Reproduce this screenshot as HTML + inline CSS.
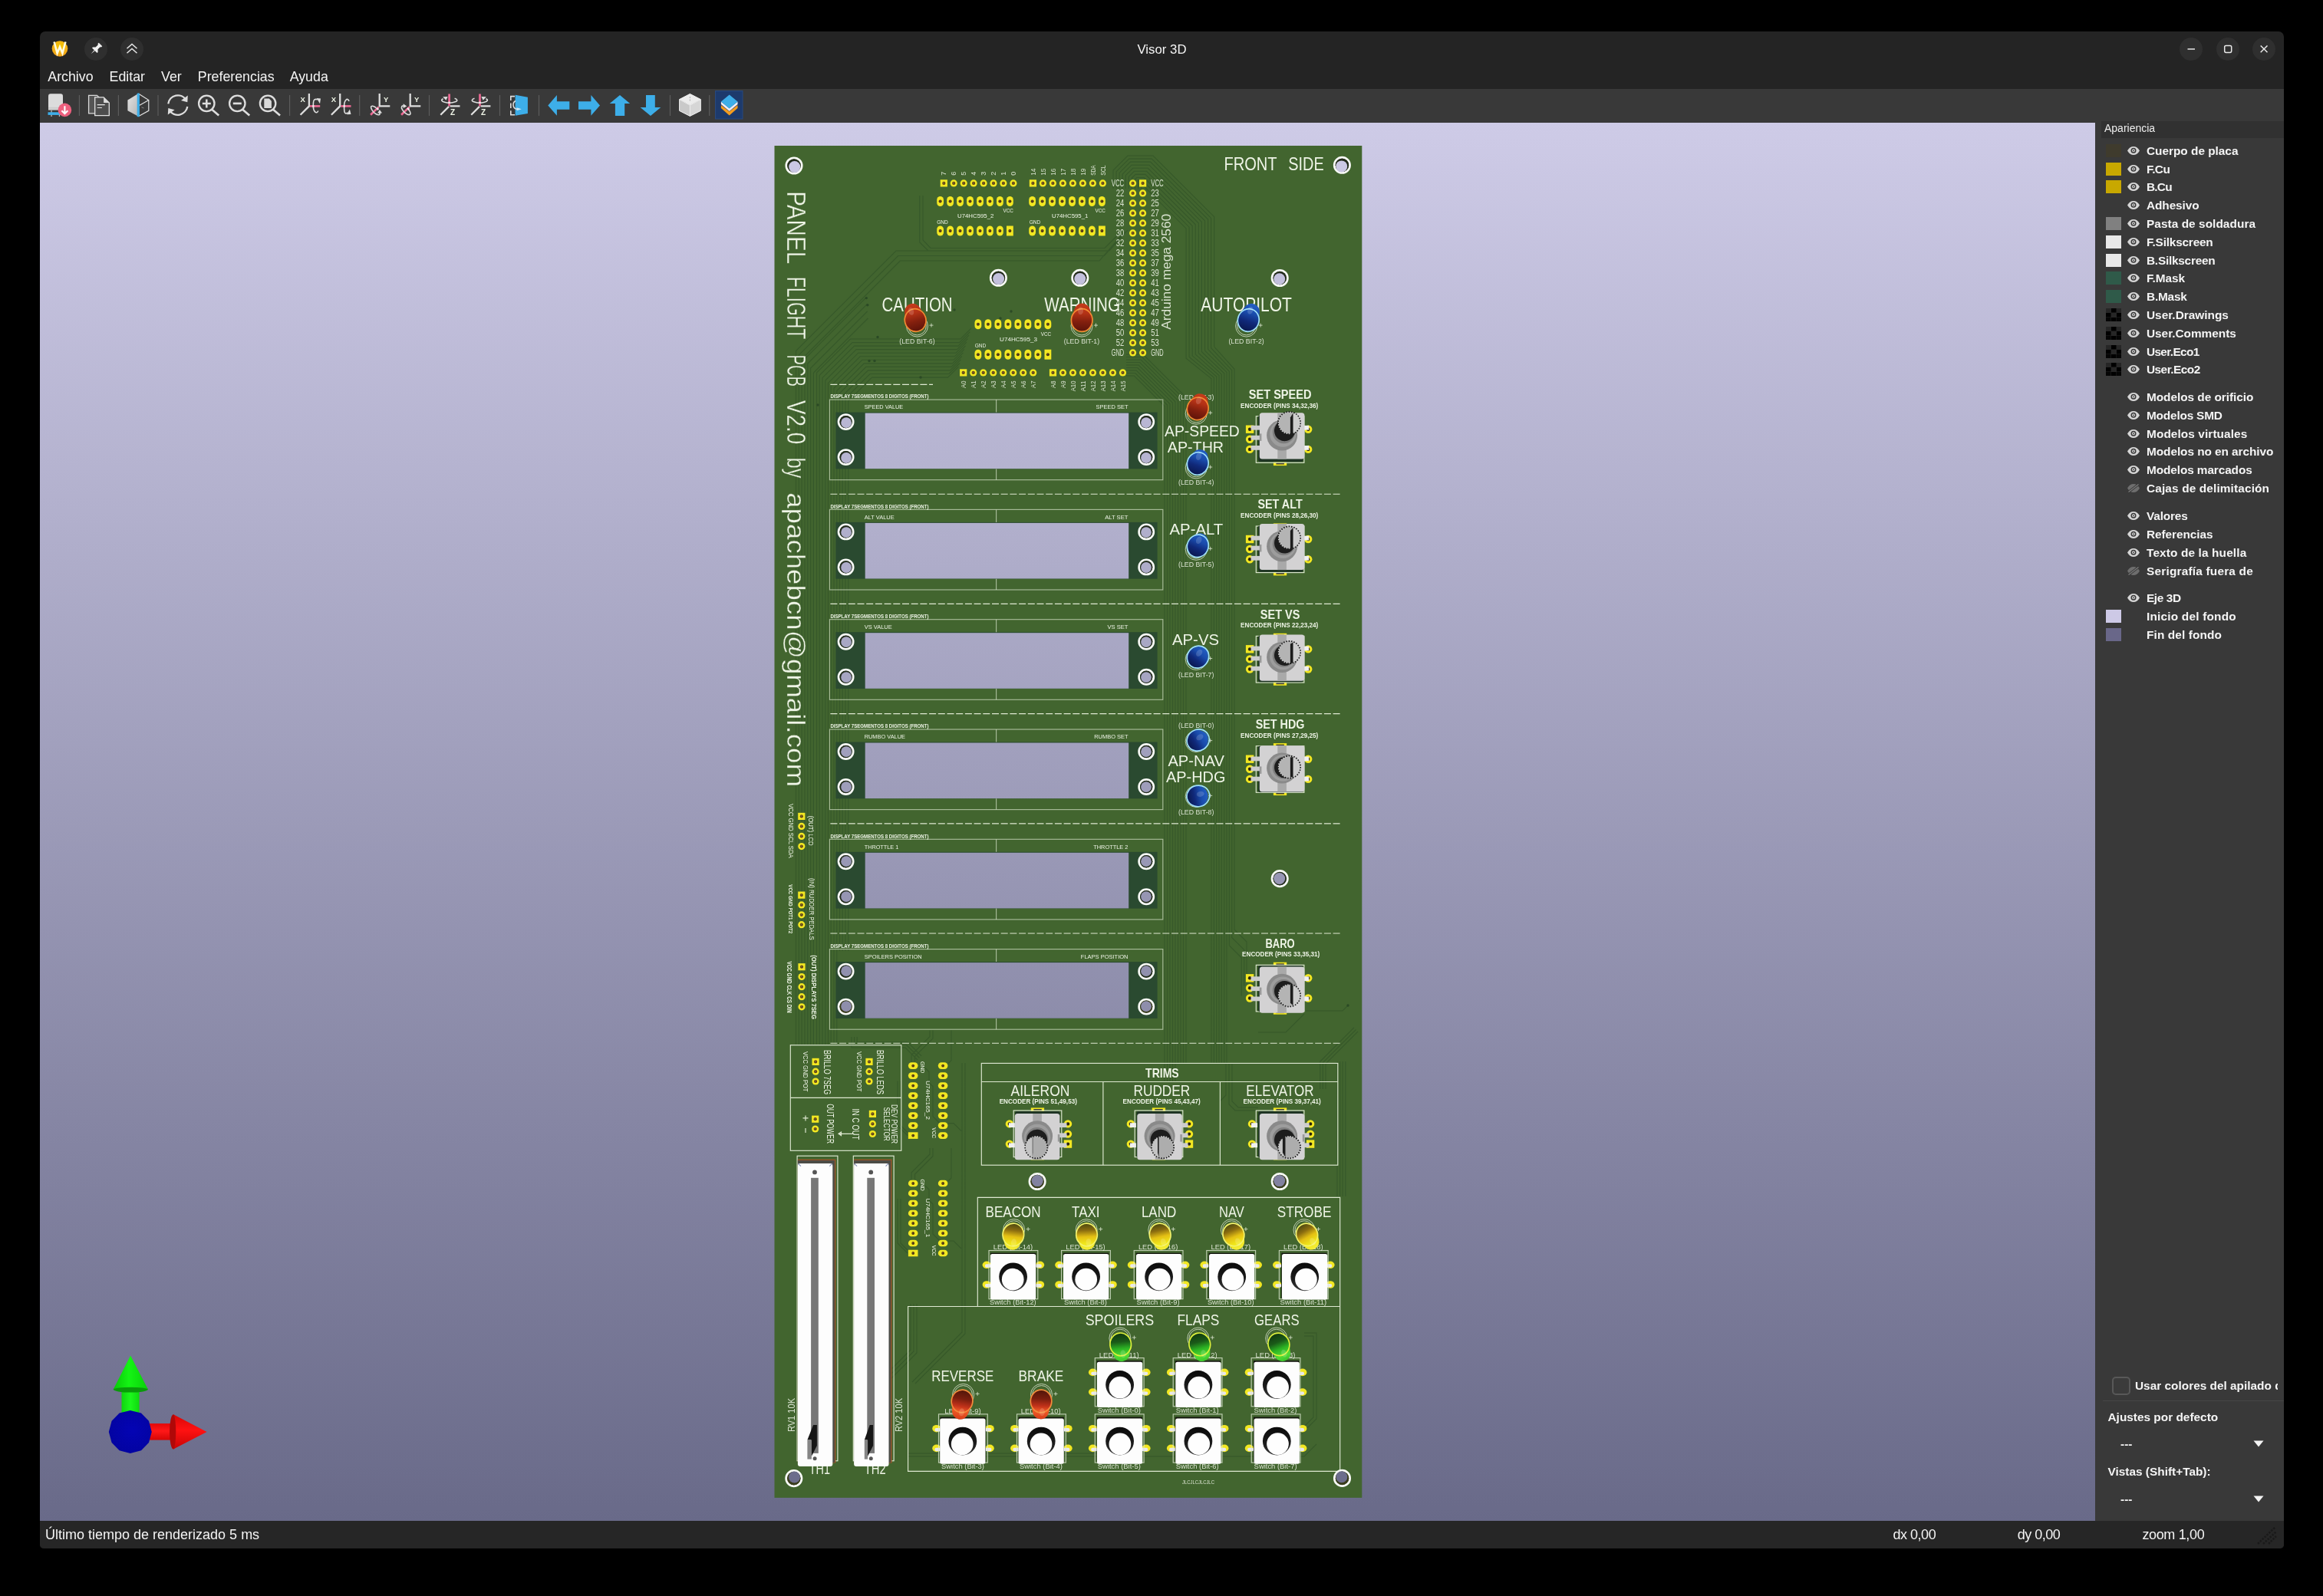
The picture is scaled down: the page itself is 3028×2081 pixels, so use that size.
<!DOCTYPE html>
<html lang="es"><head><meta charset="utf-8"><title>Visor 3D</title>
<style>
*{box-sizing:border-box;margin:0;padding:0}
html,body{width:3028px;height:2081px;background:#000;overflow:hidden}
body{font-family:"Liberation Sans",sans-serif;color:#f2f2f2;position:relative}
#win{will-change:transform;position:absolute;left:52px;top:41px;width:2925px;height:1978px;background:#242424;border-radius:7px 7px 5px 5px;overflow:hidden}
.abs{position:absolute}
#title{position:absolute;left:0;top:0;width:100%;height:44px}
#title .t{position:absolute;left:0;width:100%;top:14px;text-align:center;font-size:16.8px;line-height:20px;color:#f4f4f4;padding-left:0px}
.cbtn{position:absolute;top:7px;width:30px;height:30px;border-radius:15px;background:#2f2f2f}
#menu{position:absolute;left:0;top:44px;width:100%;height:31px;font-size:17.8px;line-height:22px}
#menu span{position:absolute;top:4px;color:#f4f4f4;white-space:nowrap}
#tool{position:absolute;left:0;top:75px;width:100%;height:44px;background:#393939}
.sep{position:absolute;top:7px;width:1px;height:30px;background:#555}
.ico{position:absolute;top:4px;width:36px;height:36px}
#canvas{position:absolute;left:0;top:119px;width:2679px;height:1823px;background:linear-gradient(#cecbe7,#696a89)}
#side{position:absolute;left:2679px;top:119px;width:246px;height:1823px;background:#393939}
#side .cap{position:absolute;left:8px;top:-2px;width:238px;height:22px;background:#313131;font-size:14px;line-height:18px;padding-left:4px;color:#ededed}
.row{position:absolute;left:0;height:24px;width:246px;font-weight:bold;font-size:15.4px;line-height:24px;white-space:nowrap}
.row .sw{position:absolute;left:14px;top:3px;width:20px;height:17px}
.row .eye{position:absolute;left:41px;top:3px;width:18px;height:17px}
.row .lb{position:absolute;left:67px;top:0;color:#f4f4f4}
#status{position:absolute;left:0;top:1942px;width:100%;height:36px;background:#262626;font-size:18px;line-height:22px;color:#f4f4f4}
#status span{position:absolute;top:7px;white-space:nowrap}
</style></head>
<body>
<div id="win">
<div id="title"><svg class="abs" style="left:13px;top:9px" width="26" height="26" viewBox="0 0 26 26"><defs><radialGradient id="gw" cx="0.5" cy="0.35" r="0.7"><stop offset="0" stop-color="#f5c800"/><stop offset="1" stop-color="#f0a020"/></radialGradient></defs><circle cx="13" cy="13.500" r="10.300" fill="url(#gw)"/><path d="M5.600 4.500L9.600 19.500L13 11L16.400 19.500L20.400 4.500" fill="none" stroke="#fffbe0" stroke-width="2.600" stroke-linejoin="miter"/></svg><div class="cbtn" style="left:57.800px;top:7.500px"></div><div class="cbtn" style="left:105.200px;top:7.500px"></div><svg class="abs" style="left:57.800px;top:7.500px" width="30" height="30" viewBox="0 0 30 30"><g transform="rotate(45 15 15)" fill="#f2f2f2"><path d="M11.800 6.500h6.400v1.800l-1.200 0.800v4.400l2.600 2.400v1.600h-9.200v-1.600l2.600-2.400v-4.400l-1.200-0.800z"/><path d="M14.400 17.500h1.200l-0.600 6.500z"/></g></svg><svg class="abs" style="left:105.200px;top:7.500px" width="30" height="30" viewBox="0 0 30 30"><path d="M8.500 14.300L15 8.500L21.500 14.300M8.500 20.300L15 14.500L21.500 20.300" fill="none" stroke="#e8e8e8" stroke-width="1.500"/></svg><div class="t">Visor 3D</div><div class="cbtn" style="left:2789.2px;top:7.500px"></div><div class="cbtn" style="left:2836.6px;top:7.500px"></div><div class="cbtn" style="left:2884.4px;top:7.500px"></div><svg class="abs" style="left:2789.200px;top:7.500px" width="30" height="30" viewBox="0 0 30 30"><path d="M10.500 15h9.500" stroke="#e8e8e8" stroke-width="1.400"/></svg><svg class="abs" style="left:2836.600px;top:7.500px" width="30" height="30" viewBox="0 0 30 30"><rect x="10.700" y="10.400" width="9" height="9" rx="1.800" fill="none" stroke="#e8e8e8" stroke-width="1.500"/></svg><svg class="abs" style="left:2884.400px;top:7.500px" width="30" height="30" viewBox="0 0 30 30"><path d="M10.700 10.500l8.800 8.800M19.500 10.500l-8.800 8.800" stroke="#e8e8e8" stroke-width="1.500"/></svg></div>
<div id="menu"><span style="left:10.3px">Archivo</span><span style="left:90.6px">Editar</span><span style="left:158.0px">Ver</span><span style="left:205.8px">Preferencias</span><span style="left:325.7px">Ayuda</span></div>
<div id="tool"><svg class="abs" style="left:0;top:0;will-change:transform" width="1000" height="44" viewBox="52 116 1000 44" font-family="Liberation Sans, sans-serif"><path d="M63 125.200a3 3 0 0 1 3-3h13a3 3 0 0 1 3 3V139H63z" fill="#dcdcdc"/><rect x="63" y="139.800" width="19" height="3.800" fill="#d0d0d0"/><rect x="63" y="138.800" width="19" height="1" fill="#f2f2f2"/><rect x="66.400" y="143.600" width="1.300" height="8.400" fill="#bdbdbd"/><rect x="76.800" y="143.600" width="1.300" height="8.400" fill="#bdbdbd"/><rect x="62.500" y="146.300" width="17" height="3.600" fill="#3daee9"/><circle cx="84.400" cy="143.400" r="8.800" fill="#ec5f7d"/><path d="M84.400 138.200v9.400M80.400 144.200l4 4 4-4" stroke="#fff" stroke-width="2.100" fill="none"/><rect x="102.8" y="124" width="1.200" height="27" fill="#5c5c5c"/><path d="M115.600 124.300h10.800l2.800 2.800v20.800h-13.600z" fill="#555" stroke="#d9d9d9" stroke-width="1.300"/><path d="M123.700 126.900h11.400l7.200 7.200v16.500h-18.600z" fill="#4d4d4d" stroke="#e2e2e2" stroke-width="1.300"/><path d="M135.100 126.900v7.200h7.200z" fill="#dcdcdc"/><path d="M126.700 136.600h10M126.700 140.500h6.200" stroke="#e6e6e6" stroke-width="1.200"/><rect x="153.8" y="124" width="1.200" height="27" fill="#5c5c5c"/><defs><linearGradient id="gcb" x1="0" y1="0" x2="1" y2="1"><stop offset="0" stop-color="#e4e4e4"/><stop offset="1" stop-color="#b4b4b4"/></linearGradient></defs><path d="M180.300 122.100L166.400 130.500V144.300L180.300 151.800z" fill="url(#gcb)"/><path d="M180.300 122.100L193.800 130.500V144.300L180.300 151.800M193.800 130.500L181.500 137.500" fill="none" stroke="#e2e2e2" stroke-width="1.200"/><path d="M184.500 139.800l3 1.200" stroke="#9a9a9a" stroke-width="0.800"/><rect x="178.700" y="121.600" width="3.200" height="30.600" fill="#3daee9"/><rect x="205.4" y="124" width="1.200" height="27" fill="#5c5c5c"/><g fill="none" stroke="#dedede" stroke-width="2.300"><path d="M219.300 135.300A12.700 12.700 0 0 1 242.600 130.200"/><path d="M244.300 139A12.700 12.700 0 0 1 221 143.900"/></g><path d="M244.800 124.600l-0.500 8.600-8.300-2.300z" fill="#dedede"/><path d="M218.800 149.600l0.500-8.600 8.300 2.300z" fill="#dedede"/><circle cx="269.3" cy="134.900" r="10.200" fill="none" stroke="#dedede" stroke-width="2.300"/><path d="M275.9 142.400l9.300 8.200" stroke="#dedede" stroke-width="2.600"/><path d="M263.800 134.900h11M269.300 129.400v11" stroke="#dedede" stroke-width="2.500"/><circle cx="309.3" cy="134.900" r="10.200" fill="none" stroke="#dedede" stroke-width="2.300"/><path d="M315.9 142.400l9.300 8.200" stroke="#dedede" stroke-width="2.600"/><path d="M303.800 134.900h11" stroke="#dedede" stroke-width="2.700"/><circle cx="349.1" cy="134.900" r="10.200" fill="none" stroke="#dedede" stroke-width="2.300"/><path d="M355.7 142.400l9.300 8.200" stroke="#dedede" stroke-width="2.600"/><path d="M344.300 128.600h6.500l3.100 3.100v9.200h-9.600z" fill="#d9d9d9"/><rect x="377" y="124" width="1.200" height="27" fill="#5c5c5c"/><path d="M402.9 122.100V138.400L391.6 149.700" fill="none" stroke="#dedede" stroke-width="2.300"/><path d="M403.9 138.400H417.2" stroke="#ec6a94" stroke-width="2.600"/><text x="394.7" y="133" font-size="9.500" font-weight="bold" fill="#dedede" text-anchor="middle">X</text><path d="M414 129.700C408.5 128 408.3 132 408.3 138.400S412.5 150 414.8 144.500" fill="none" stroke="#dedede" stroke-width="1.600"/><path d="M412.8 128l5.200 0.600-1 6.600z" fill="#dedede"/><rect x="407.3" y="137.100" width="2.200" height="2.600" fill="#f3e6ea"/><path d="M443.2 122.100V138.400L431.9 149.700" fill="none" stroke="#dedede" stroke-width="2.300"/><path d="M444.2 138.400H457.5" stroke="#ec6a94" stroke-width="2.600"/><text x="435" y="133" font-size="9.500" font-weight="bold" fill="#dedede" text-anchor="middle">X</text><path d="M455.1 132C452.8 126 448.6 131 448.6 138.400S448.8 150 453.3 146.800" fill="none" stroke="#dedede" stroke-width="1.600"/><path d="M452 149.300l5.500-0.300-1.600-6.500z" fill="#dedede"/><rect x="447.6" y="137.100" width="2.200" height="2.600" fill="#f3e6ea"/><rect x="468.1" y="124" width="1.200" height="27" fill="#5c5c5c"/><path d="M494.7 122.100V138.400H508.3" fill="none" stroke="#dedede" stroke-width="2.300"/><path d="M493.7 139.400L483.1 149.700" stroke="#ec6a94" stroke-width="2.700"/><text x="503.2" y="133.300" font-size="9.500" font-weight="bold" fill="#dedede" text-anchor="middle">Y</text><g transform="translate(489.3 143.9) rotate(45)"><path d="M-1.500 -3.100A7.500 3.200 0 1 0 5.500 -2.200" fill="none" stroke="#dedede" stroke-width="1.600"/><path d="M3.200 -4.600l5.600 1-4.200 4.200z" fill="#dedede"/></g><path d="M490.9 140.800l2.400 2.200" stroke="#f3e6ea" stroke-width="2.400"/><path d="M534.7 122.100V138.400H548.3" fill="none" stroke="#dedede" stroke-width="2.300"/><path d="M533.7 139.400L523.1 149.700" stroke="#ec6a94" stroke-width="2.700"/><text x="543.2" y="133.300" font-size="9.500" font-weight="bold" fill="#dedede" text-anchor="middle">Y</text><g transform="translate(529.3 143.9) rotate(45)"><path d="M1.500 -3.100A7.500 3.200 0 1 1 -5.500 -2.200" fill="none" stroke="#dedede" stroke-width="1.600"/><path d="M-3.200 -4.600l-5.600 1 4.200 4.200z" fill="#dedede"/></g><path d="M530.9 140.800l2.400 2.200" stroke="#f3e6ea" stroke-width="2.400"/><rect x="558.9" y="124" width="1.200" height="27" fill="#5c5c5c"/><path d="M586.6 138.400H599.5M585.1 138.900L574.3 149.700" fill="none" stroke="#dedede" stroke-width="2.300"/><path d="M585.6 122.500V138.400" stroke="#ec6a94" stroke-width="2.700"/><text x="590.1" y="150.400" font-size="10" font-weight="bold" fill="#dedede" text-anchor="middle">Z</text><path d="M592.6 128.3A10 3.300 0 1 1 577.6 128.8" fill="none" stroke="#dedede" stroke-width="1.600"/><path d="M577.2 126.300l6.500-0.300-2.300 4.800z" fill="#dedede"/><rect x="584.2" y="132.600" width="2.700" height="2.200" fill="#f3e6ea"/><path d="M626.5 138.400H639.4M625 138.900L614.2 149.700" fill="none" stroke="#dedede" stroke-width="2.300"/><path d="M625.5 122.500V138.400" stroke="#ec6a94" stroke-width="2.700"/><text x="630" y="150.400" font-size="10" font-weight="bold" fill="#dedede" text-anchor="middle">Z</text><path d="M618.5 128.3A10 3.300 0 1 0 633.5 128.8" fill="none" stroke="#dedede" stroke-width="1.600"/><path d="M633.9 126.300l-6.500-0.300 2.300 4.800z" fill="#dedede"/><rect x="624.1" y="132.600" width="2.700" height="2.200" fill="#f3e6ea"/><rect x="650.9" y="124" width="1.200" height="27" fill="#5c5c5c"/><path d="M671 125.600H665.800V131M665.800 134.500v6.500M665.800 144.300v5.400H671" fill="none" stroke="#dedede" stroke-width="1.600"/><path d="M671.600 123.700L687.900 126.800V148.100L671.600 150.800z" fill="#3daee9"/><path d="M672 131.500C667.500 134 668 141.500 674 142.300" fill="none" stroke="#dedede" stroke-width="1.500"/><path d="M673.600 140.300l6.200 2-6.200 2z" fill="#cfeaf8"/><rect x="701.9" y="124" width="1.200" height="27" fill="#5c5c5c"/><path d="M714.300 137.400L725.900 124.100V132.200H742.300V142.700H725.900V150.800z" fill="#3daee9"/><path d="M782 137.400L770.400 124.100V132.200H754V142.700H770.400V150.800z" fill="#3daee9"/><path d="M808 123.900L821.200 135H814.200V151H801.900V135H794.700z" fill="#3daee9"/><path d="M848 151L861.300 140H853.800V123.900H842V140H834.600z" fill="#3daee9"/><rect x="872.9" y="124" width="1.200" height="27" fill="#5c5c5c"/><path d="M899.400 122.400L913.300 129.600L899.400 137.100L885.600 129.600z" fill="#ececec"/><path d="M885.600 129.600L899.400 137.100V151.400L885.600 144.400z" fill="#c9c9c9"/><path d="M913.300 129.600L899.400 137.100V151.400L913.300 144.400z" fill="#d6d6d6"/><path d="M899.400 122.400L913.300 129.600V144.400L899.400 151.400L885.600 144.400V129.600zM885.600 129.600L899.400 137.100L913.300 129.600M899.400 137.100V151.400" fill="none" stroke="#f2f2f2" stroke-width="1"/><path d="M899.400 126v7" stroke="#9a9a9a" stroke-width="0.800" stroke-dasharray="2 1.500"/><rect x="924.1" y="124" width="1.200" height="27" fill="#5c5c5c"/><rect x="932.500" y="118.500" width="35.500" height="36.500" fill="#1d3a6c" stroke="#27497f" stroke-width="1"/><path d="M939.900 141l10.800 9.400 10.800-9.400v-4l-10.800 8.600-10.800-8.600z" fill="#f39c1f"/><path d="M939.900 136l10.800 9 10.800-9v-3.500l-10.800 8.800-10.800-8.800z" fill="#f0ecf4"/><path d="M950.700 123.600L961.500 132.600L950.700 141.600L939.900 132.600z" fill="#3daee9"/></svg></div>
<div id="canvas"><svg class="abs" style="left:0;top:0;will-change:transform" width="2679" height="1823" viewBox="52 160 2679 1823">
<style>
text{font-family:"Liberation Sans",sans-serif;fill:#eef4e6;white-space:pre}
.sb{font-weight:bold}
.big{stroke:#42652f;stroke-width:0.400px}
.st{fill-opacity:0.880}
.ln{fill:none;stroke:#dfe9d2;stroke-width:1.150}
.lnt{fill:none;stroke:#e4edd8;stroke-width:0.900;stroke-opacity:0.850}
.dash{stroke-dasharray:9 2.700}
.lnd{stroke-opacity:0.650}
.ring{fill:none;stroke:#f8faf6;stroke-width:2.900}
.cut{fill:url(#bg)}
.tr{fill:none;stroke:#345629;stroke-width:1.100;stroke-opacity:0.850}
</style>

<defs>
<linearGradient id="bg" gradientUnits="userSpaceOnUse" x1="0" y1="160" x2="0" y2="1983"><stop offset="0" stop-color="#cecbe7"/><stop offset="1" stop-color="#696a89"/></linearGradient>
<g id="pr"><circle r="4.600" fill="#f2e722"/><circle r="2.100" fill="#5e4318"/><circle r="0.900" cx="-0.300" cy="-0.400" fill="#8a6a30"/></g>
<g id="ps"><rect x="-4.600" y="-4.600" width="9.200" height="9.200" fill="#f2e722"/><circle r="2.100" fill="#5e4318"/><circle r="0.900" cx="-0.300" cy="-0.400" fill="#8a6a30"/></g>
<g id="po"><rect x="-4.400" y="-6.500" width="8.800" height="13" rx="4.400" fill="#f2e722"/><circle r="2" fill="#4a3214"/><circle r="0.800" cx="-0.300" cy="-0.400" fill="#7a5a28"/></g>
<g id="pos"><rect x="-4.400" y="-6.500" width="8.800" height="13" fill="#f2e722"/><circle r="2" fill="#4a3214"/><circle r="0.800" cx="-0.300" cy="-0.400" fill="#7a5a28"/></g>
<g id="poh"><rect x="-6.300" y="-4.300" width="12.600" height="8.600" rx="4.300" fill="#f2e722"/><circle r="1.900" fill="#4a3214"/><circle r="0.800" cx="-0.300" cy="-0.400" fill="#7a5a28"/></g>
<g id="pohs"><rect x="-6.300" y="-4.300" width="12.600" height="8.600" fill="#f2e722"/><circle r="1.900" fill="#4a3214"/><circle r="0.800" cx="-0.300" cy="-0.400" fill="#7a5a28"/></g>

<linearGradient id="gLr"><stop offset="0" stop-color="#5e140a"/><stop offset="0.350" stop-color="#84200e"/><stop offset="0.650" stop-color="#b43216"/><stop offset="1" stop-color="#c63c1a"/></linearGradient>
<linearGradient id="gLR"><stop offset="0" stop-color="#52160a"/><stop offset="0.300" stop-color="#7a1e0e"/><stop offset="0.550" stop-color="#c2321a"/><stop offset="0.720" stop-color="#ee5a26"/><stop offset="1" stop-color="#d63c1a"/></linearGradient>
<linearGradient id="gLb"><stop offset="0" stop-color="#0a1850"/><stop offset="0.350" stop-color="#10297a"/><stop offset="0.650" stop-color="#1a4cac"/><stop offset="1" stop-color="#245fc4"/></linearGradient>
<linearGradient id="gLy"><stop offset="0" stop-color="#4e4a10"/><stop offset="0.250" stop-color="#8a6c10"/><stop offset="0.500" stop-color="#e4c014"/><stop offset="0.750" stop-color="#f0e61a"/><stop offset="1" stop-color="#f4ee3a"/></linearGradient>
<linearGradient id="gLg"><stop offset="0" stop-color="#123a12"/><stop offset="0.300" stop-color="#1a5a18"/><stop offset="0.550" stop-color="#2cb424"/><stop offset="0.800" stop-color="#52dc34"/><stop offset="1" stop-color="#38c42a"/></linearGradient>

<linearGradient id="gAg"><stop offset="0" stop-color="#0fd40f"/><stop offset="0.500" stop-color="#1cf81c"/><stop offset="1" stop-color="#0fd80f"/></linearGradient>
<linearGradient id="gAg2"><stop offset="0" stop-color="#08c808"/><stop offset="0.450" stop-color="#14f414"/><stop offset="1" stop-color="#0ad00a"/></linearGradient>
<linearGradient id="gAr" x1="0" y1="0" x2="0" y2="1"><stop offset="0" stop-color="#e40808"/><stop offset="0.450" stop-color="#ff1818"/><stop offset="1" stop-color="#d40606"/></linearGradient>
<linearGradient id="gAr2" x1="0" y1="0" x2="0" y2="1"><stop offset="0" stop-color="#d80606"/><stop offset="0.450" stop-color="#ff1212"/><stop offset="1" stop-color="#c80404"/></linearGradient>
<radialGradient id="gAb" cx="0.550" cy="0.450" r="0.600"><stop offset="0" stop-color="#0404b4"/><stop offset="1" stop-color="#0303a0"/></radialGradient>
<linearGradient id="gBtn" x1="0" y1="0" x2="0" y2="1"><stop offset="0" stop-color="#0a0a0a"/><stop offset="0.600" stop-color="#1c1c1c"/><stop offset="1" stop-color="#3a3a3a"/></linearGradient>
</defs>
<rect x="1009.500" y="190" width="765.800" height="1762.900" fill="#42652f"/>
<path class="tr" d="M1451 246L1451 222L1470 203L1503 203L1582.7 282.7L1582.7 452L1609 481.3L1609 1212L1625 1228L1625 1272.3M1455.1 246L1455.1 223.7L1471.7 207.1L1501.3 207.1L1578.6 284.4L1578.6 453.7L1605.7 482.7L1605.7 1222.4L1621.7 1238.4L1621.7 1285.4M1459.1 246L1459.1 225.4L1473.4 211.1L1499.6 211.1L1574.6 286.1L1574.6 455.4L1602.3 484.1L1602.3 1232.8L1618.3 1248.8L1618.3 1298.5M1463.2 246L1463.2 227.1L1475.1 215.2L1497.9 215.2L1570.5 287.8L1570.5 457.1L1599 485.4L1599 1386M1467.3 246L1467.3 228.7L1476.7 219.3L1496.3 219.3L1566.4 289.4L1566.4 458.7L1595.7 486.8L1595.7 1386M1471.3 246L1471.3 230.4L1478.4 223.3L1494.6 223.3L1562.4 291.1L1562.4 460.4L1592.3 488.2L1592.3 1386M1475.4 246L1475.4 232.1L1480.1 227.4L1492.9 227.4L1558.3 292.8L1558.3 462.1L1589 489.6L1589 1386M1479.5 246L1479.5 233.8L1481.8 231.5L1491.2 231.5L1554.2 294.5L1554.2 463.8L1585.7 491L1585.7 1386M1483.6 246L1483.6 235.5L1483.5 235.6L1489.5 235.6L1550.1 296.2L1550.1 465.5L1582.4 492.3L1582.4 1386M1487.6 246L1487.6 237.2L1485.2 239.6L1487.8 239.6L1546.1 297.9L1546.1 467.2L1579 493.7L1579 1386M1702 1318L1750 1318L1757 1311M1700 1322L1676 1346L1640 1346M1468 462L1490 462L1546 518L1546 1386M1468 465.5L1488.6 465.5L1542.5 519.4L1542.5 1386M1468 469L1487.1 469L1539 520.9L1539 1386M1468 472.5L1485.7 472.5L1535.5 522.3L1535.5 1386M1468 476L1484.2 476L1532 523.8L1532 1386M1468 479.5L1482.8 479.5L1528.5 525.2L1528.5 1386M1468 483L1481.3 483L1525 526.7L1525 1386M1468 486.5L1479.9 486.5L1521.5 528.1L1521.5 1386M1468 490L1478.4 490L1518 529.6L1518 1386M1470 300L1446 327L1168 327L1037.5 457.5L1037.5 1362M1467 302L1439.5 333.5L1170.7 333.5L1041.3 462.9L1041.3 1362M1464 304L1433 340L1173.4 340L1045.1 468.3L1045.1 1362M1198.8 255L1198.8 316L1210 327M1203 255L1203 313L1213 323.5L1440 323.5L1462 301.5M1129 388L1049 468L1049 1362M1129.8 397L1052.8 474L1052.8 1362M1130.6 406L1056.6 480L1056.6 1362M1131.4 415L1060.4 486L1060.4 1362M1064.5 1362L1064.5 486L1108.5 442L1252 442L1266 428M1068.2 1362L1068.2 489.4L1111 446.6L1250.5 446.6L1264.5 432.6M1072 1362L1072 492.7L1113.6 451.1L1249 451.1L1263 437.1M1075.8 1362L1075.8 496L1116.2 455.6L1247.5 455.6L1261.5 441.6M1079.5 1362L1079.5 499.4L1118.7 460.2L1246 460.2L1260 446.2M1083.2 1362L1083.2 502.8L1121.2 464.8L1244.5 464.8L1258.5 450.8M1087 1362L1087 506.1L1123.8 469.3L1243 469.3L1257 455.3M1090.8 1362L1090.8 509.5L1126.3 473.9L1241.5 473.9L1255.5 459.9M1094.5 1240L1094.5 512.8L1128.9 478.4L1240 478.4L1254 464.4M1098.2 1240L1098.2 516.1L1131.5 482.9L1238.5 482.9L1252.5 468.9M1102 1240L1102 519.5L1134 487.5L1237 487.5L1251 473.5M1105.8 1240L1105.8 522.9L1136.5 492.1L1235.5 492.1L1249.5 478.1M1110 1352L1110 1366L1180 1366L1196 1382M1113.6 1352L1113.6 1362.4L1181.5 1362.4L1198.5 1379.5M1117.2 1352L1117.2 1358.8L1183 1358.8L1201.1 1376.9M1532 1386L1532 1410M1528.5 1386L1528.5 1410M1525 1386L1525 1410M1521.5 1386L1521.5 1410M1518 1386L1518 1410M1598 1386L1598 1428L1590 1436M1602 1386L1602 1440L1610 1448L1640 1448M1606 1386L1606 1436L1614 1444L1640 1444M1743 1384L1743 1560M1746.6 1384L1746.6 1560M1750.2 1384L1750.2 1560M1753.8 1384L1753.8 1560M1770 1345L1728 1387L1728 1420M1767.5 1342.5L1724.4 1385.5L1724.4 1420M1764.9 1339.9L1720.8 1384L1720.8 1420M1187 1700L1187 1760L1140 1807L1140 1830M1191 1700L1191 1762L1144 1809L1144 1830M1195 1700L1195 1764L1148 1811L1148 1830M1254 1386L1254 1737L1189 1802M1258 1386L1258 1739L1193 1804M1188 1385.6L1188 1375.6L1212 1351.6L1212 1343.6M1192.5 1385.6L1192.5 1377.6L1216 1354.1L1216 1343.6M1206 1392.6L1211 1397.6L1211 1411.6L1216 1416.6L1216 1455.6L1224 1463.6L1229 1463.6M1236 1386.6L1240 1382.6L1240 1343.6M1236 1464.6L1243 1464.6L1253 1474.6M1183 1476.6L1174 1467.6L1174 1409.6M1183 1480.6L1170 1467.6L1170 1409.6M1188 1539L1188 1529L1212 1505L1212 1497M1192.5 1539L1192.5 1531L1216 1507.5L1216 1497M1206 1546L1211 1551L1211 1565L1216 1570L1216 1609L1224 1617L1229 1617M1236 1540L1240 1536L1240 1497M1236 1618L1243 1618L1253 1628M1183 1630L1174 1621L1174 1563M1183 1634L1170 1621L1170 1563M1700 1738L1716 1738L1716 1850L1690 1876L1690 1900M1700 1742L1712 1742L1712 1848L1686 1874M1183 1895L1430 1895M1183 1899L1700 1899L1716 1883"/><circle cx="1129.3" cy="388.6" r="1.700" fill="#2b4a25"/><circle cx="1130.8" cy="397.8" r="1.700" fill="#2b4a25"/><circle cx="1144" cy="439.5" r="1.700" fill="#2b4a25"/><circle cx="1133" cy="470.5" r="1.700" fill="#2b4a25"/><circle cx="1140" cy="470.5" r="1.700" fill="#2b4a25"/><circle cx="1244" cy="404" r="1.700" fill="#2b4a25"/><circle cx="1200" cy="492" r="1.700" fill="#2b4a25"/><circle cx="1304" cy="415" r="1.700" fill="#2b4a25"/><circle cx="1318" cy="406" r="1.700" fill="#2b4a25"/><circle cx="1066" cy="528" r="1.700" fill="#2b4a25"/><circle cx="1757" cy="1311" r="1.700" fill="#2b4a25"/>
<rect x="1089.400" y="537.6" width="419.200" height="73.8" fill="#2a4a30"/><rect class="cut" x="1127.700" y="538.6" width="343.500" height="72.6"/><rect class="ln lnd" x="1081.400" y="521.1" width="434.400" height="104.6"/><path class="ln lnd" d="M1298.600 521.1V537.6M1298.600 611.4V625.7"/><circle cx="1102.6" cy="550.1" r="9.5" class="ring"/><circle cx="1102.6" cy="550.1" r="8.2" fill="#232b1c"/><circle cx="1103.1" cy="551.1" r="6.9" fill="url(#bg)"/><circle cx="1102.6" cy="596.1" r="9.5" class="ring"/><circle cx="1102.6" cy="596.1" r="8.2" fill="#232b1c"/><circle cx="1103.1" cy="597" r="6.9" fill="url(#bg)"/><circle cx="1494.2" cy="550.1" r="9.5" class="ring"/><circle cx="1494.2" cy="550.1" r="8.2" fill="#232b1c"/><circle cx="1494" cy="551.1" r="6.9" fill="url(#bg)"/><circle cx="1494.2" cy="596.1" r="9.5" class="ring"/><circle cx="1494.2" cy="596.1" r="8.2" fill="#232b1c"/><circle cx="1494" cy="597" r="6.9" fill="url(#bg)"/><text class="sb" x="1082.4" y="519.4" font-size="7" textLength="128.1" lengthAdjust="spacingAndGlyphs">DISPLAY 7SEGMENTOS 8 DIGITOS (FRONT)</text><text class="s" x="1126.7" y="533.3" font-size="8.1" textLength="50.6" lengthAdjust="spacingAndGlyphs">SPEED VALUE</text><text class="s" x="1428.5" y="533.3" font-size="8.1" textLength="42" lengthAdjust="spacingAndGlyphs">SPEED SET</text><rect x="1089.400" y="680.9" width="419.200" height="73.8" fill="#2a4a30"/><rect class="cut" x="1127.700" y="681.9" width="343.500" height="72.6"/><rect class="ln lnd" x="1081.400" y="664.4" width="434.400" height="104.6"/><path class="ln lnd" d="M1298.600 664.4V680.9M1298.600 754.7V769"/><circle cx="1102.6" cy="693.4" r="9.5" class="ring"/><circle cx="1102.6" cy="693.4" r="8.2" fill="#232b1c"/><circle cx="1103.1" cy="694.1" r="6.9" fill="url(#bg)"/><circle cx="1102.6" cy="739.4" r="9.5" class="ring"/><circle cx="1102.6" cy="739.4" r="8.2" fill="#232b1c"/><circle cx="1103.1" cy="740" r="6.9" fill="url(#bg)"/><circle cx="1494.2" cy="693.4" r="9.5" class="ring"/><circle cx="1494.2" cy="693.4" r="8.2" fill="#232b1c"/><circle cx="1494" cy="694.1" r="6.9" fill="url(#bg)"/><circle cx="1494.2" cy="739.4" r="9.5" class="ring"/><circle cx="1494.2" cy="739.4" r="8.2" fill="#232b1c"/><circle cx="1494" cy="740" r="6.9" fill="url(#bg)"/><text class="sb" x="1082.4" y="662.7" font-size="7" textLength="128.1" lengthAdjust="spacingAndGlyphs">DISPLAY 7SEGMENTOS 8 DIGITOS (FRONT)</text><text class="s" x="1126.7" y="676.6" font-size="8.1" textLength="39" lengthAdjust="spacingAndGlyphs">ALT VALUE</text><text class="s" x="1440.2" y="676.6" font-size="8.1" textLength="30.3" lengthAdjust="spacingAndGlyphs">ALT SET</text><rect x="1089.400" y="824.2" width="419.200" height="73.8" fill="#2a4a30"/><rect class="cut" x="1127.700" y="825.2" width="343.500" height="72.6"/><rect class="ln lnd" x="1081.400" y="807.7" width="434.400" height="104.6"/><path class="ln lnd" d="M1298.600 807.7V824.2M1298.600 898V912.3"/><circle cx="1102.6" cy="836.7" r="9.5" class="ring"/><circle cx="1102.6" cy="836.7" r="8.2" fill="#232b1c"/><circle cx="1103.1" cy="837.1" r="6.9" fill="url(#bg)"/><circle cx="1102.6" cy="882.7" r="9.5" class="ring"/><circle cx="1102.6" cy="882.7" r="8.2" fill="#232b1c"/><circle cx="1103.1" cy="883.1" r="6.9" fill="url(#bg)"/><circle cx="1494.2" cy="836.7" r="9.5" class="ring"/><circle cx="1494.2" cy="836.7" r="8.2" fill="#232b1c"/><circle cx="1494" cy="837.1" r="6.9" fill="url(#bg)"/><circle cx="1494.2" cy="882.7" r="9.5" class="ring"/><circle cx="1494.2" cy="882.7" r="8.2" fill="#232b1c"/><circle cx="1494" cy="883.1" r="6.9" fill="url(#bg)"/><text class="sb" x="1082.4" y="806" font-size="7" textLength="128.1" lengthAdjust="spacingAndGlyphs">DISPLAY 7SEGMENTOS 8 DIGITOS (FRONT)</text><text class="s" x="1126.7" y="819.9" font-size="8.1" textLength="36" lengthAdjust="spacingAndGlyphs">VS VALUE</text><text class="s" x="1443.5" y="819.9" font-size="8.1" textLength="27" lengthAdjust="spacingAndGlyphs">VS SET</text><rect x="1089.400" y="967.5" width="419.200" height="73.8" fill="#2a4a30"/><rect class="cut" x="1127.700" y="968.5" width="343.500" height="72.6"/><rect class="ln lnd" x="1081.400" y="951" width="434.400" height="104.6"/><path class="ln lnd" d="M1298.600 951V967.5M1298.600 1041.3V1055.6"/><circle cx="1102.6" cy="980" r="9.5" class="ring"/><circle cx="1102.6" cy="980" r="8.2" fill="#232b1c"/><circle cx="1103.1" cy="980.2" r="6.9" fill="url(#bg)"/><circle cx="1102.6" cy="1026" r="9.5" class="ring"/><circle cx="1102.6" cy="1026" r="8.2" fill="#232b1c"/><circle cx="1103.1" cy="1026.1" r="6.9" fill="url(#bg)"/><circle cx="1494.2" cy="980" r="9.5" class="ring"/><circle cx="1494.2" cy="980" r="8.2" fill="#232b1c"/><circle cx="1494" cy="980.2" r="6.9" fill="url(#bg)"/><circle cx="1494.2" cy="1026" r="9.5" class="ring"/><circle cx="1494.2" cy="1026" r="8.2" fill="#232b1c"/><circle cx="1494" cy="1026.1" r="6.9" fill="url(#bg)"/><text class="sb" x="1082.4" y="949.3" font-size="7" textLength="128.1" lengthAdjust="spacingAndGlyphs">DISPLAY 7SEGMENTOS 8 DIGITOS (FRONT)</text><text class="s" x="1126.7" y="963.2" font-size="8.1" textLength="53.3" lengthAdjust="spacingAndGlyphs">RUMBO VALUE</text><text class="s" x="1426.2" y="963.2" font-size="8.1" textLength="44.3" lengthAdjust="spacingAndGlyphs">RUMBO SET</text><rect x="1089.400" y="1110.8" width="419.200" height="73.8" fill="#2a4a30"/><rect class="cut" x="1127.700" y="1111.8" width="343.500" height="72.6"/><rect class="ln lnd" x="1081.400" y="1094.3" width="434.400" height="104.6"/><path class="ln lnd" d="M1298.600 1094.3V1110.8M1298.600 1184.6V1198.9"/><circle cx="1102.6" cy="1123.3" r="9.5" class="ring"/><circle cx="1102.6" cy="1123.3" r="8.2" fill="#232b1c"/><circle cx="1103.1" cy="1123.2" r="6.9" fill="url(#bg)"/><circle cx="1102.6" cy="1169.3" r="9.5" class="ring"/><circle cx="1102.6" cy="1169.3" r="8.2" fill="#232b1c"/><circle cx="1103.1" cy="1169.1" r="6.9" fill="url(#bg)"/><circle cx="1494.2" cy="1123.3" r="9.5" class="ring"/><circle cx="1494.2" cy="1123.3" r="8.2" fill="#232b1c"/><circle cx="1494" cy="1123.2" r="6.9" fill="url(#bg)"/><circle cx="1494.2" cy="1169.3" r="9.5" class="ring"/><circle cx="1494.2" cy="1169.3" r="8.2" fill="#232b1c"/><circle cx="1494" cy="1169.1" r="6.9" fill="url(#bg)"/><text class="sb" x="1082.4" y="1092.6" font-size="7" textLength="128.1" lengthAdjust="spacingAndGlyphs">DISPLAY 7SEGMENTOS 8 DIGITOS (FRONT)</text><text class="s" x="1126.7" y="1106.5" font-size="8.1" textLength="44.6" lengthAdjust="spacingAndGlyphs">THROTTLE 1</text><text class="s" x="1425.2" y="1106.5" font-size="8.1" textLength="45.3" lengthAdjust="spacingAndGlyphs">THROTTLE 2</text><rect x="1089.400" y="1254.1" width="419.200" height="73.8" fill="#2a4a30"/><rect class="cut" x="1127.700" y="1255.1" width="343.500" height="72.6"/><rect class="ln lnd" x="1081.400" y="1237.6" width="434.400" height="104.6"/><path class="ln lnd" d="M1298.600 1237.6V1254.1M1298.600 1327.9V1342.2"/><circle cx="1102.6" cy="1266.6" r="9.5" class="ring"/><circle cx="1102.6" cy="1266.6" r="8.2" fill="#232b1c"/><circle cx="1103.1" cy="1266.2" r="6.9" fill="url(#bg)"/><circle cx="1102.6" cy="1312.6" r="9.5" class="ring"/><circle cx="1102.6" cy="1312.6" r="8.2" fill="#3a3c1c"/><circle cx="1103.1" cy="1312.1" r="6.9" fill="url(#bg)"/><circle cx="1494.2" cy="1266.6" r="9.5" class="ring"/><circle cx="1494.2" cy="1266.6" r="8.2" fill="#232b1c"/><circle cx="1494" cy="1266.2" r="6.9" fill="url(#bg)"/><circle cx="1494.2" cy="1312.6" r="9.5" class="ring"/><circle cx="1494.2" cy="1312.6" r="8.2" fill="#3a3c1c"/><circle cx="1494" cy="1312.1" r="6.9" fill="url(#bg)"/><text class="sb" x="1082.4" y="1235.9" font-size="7" textLength="128.1" lengthAdjust="spacingAndGlyphs">DISPLAY 7SEGMENTOS 8 DIGITOS (FRONT)</text><text class="s" x="1126.7" y="1249.8" font-size="8.1" textLength="75" lengthAdjust="spacingAndGlyphs">SPOILERS POSITION</text><text class="s" x="1408.8" y="1249.8" font-size="8.1" textLength="61.7" lengthAdjust="spacingAndGlyphs">FLAPS POSITION</text>
<path class="ln dash" d="M1082.400 501.300H1216"/><path class="ln dash" d="M1082.400 644.2H1747.300"/><path class="ln dash" d="M1082.400 787.4H1747.300"/><path class="ln dash" d="M1082.400 930.6H1747.300"/><path class="ln dash" d="M1082.400 1073.8H1747.300"/><path class="ln dash" d="M1082.400 1217H1747.300"/><path class="ln dash" d="M1082.400 1360.2H1747.300"/>
<use href="#ps" x="1230.3" y="238.9"/><text class="st" transform="translate(1233.4 228.8) rotate(-90)" font-size="9" textLength="5" lengthAdjust="spacingAndGlyphs">7</text><use href="#pr" x="1243.2" y="238.9"/><text class="st" transform="translate(1246.3 228.8) rotate(-90)" font-size="9" textLength="5" lengthAdjust="spacingAndGlyphs">6</text><use href="#pr" x="1256.2" y="238.9"/><text class="st" transform="translate(1259.3 228.8) rotate(-90)" font-size="9" textLength="5" lengthAdjust="spacingAndGlyphs">5</text><use href="#pr" x="1269.1" y="238.9"/><text class="st" transform="translate(1272.2 228.8) rotate(-90)" font-size="9" textLength="5" lengthAdjust="spacingAndGlyphs">4</text><use href="#pr" x="1282.1" y="238.9"/><text class="st" transform="translate(1285.2 228.8) rotate(-90)" font-size="9" textLength="5" lengthAdjust="spacingAndGlyphs">3</text><use href="#pr" x="1295" y="238.9"/><text class="st" transform="translate(1298.1 228.8) rotate(-90)" font-size="9" textLength="5" lengthAdjust="spacingAndGlyphs">2</text><use href="#pr" x="1307.9" y="238.9"/><text class="st" transform="translate(1311 228.8) rotate(-90)" font-size="9" textLength="5" lengthAdjust="spacingAndGlyphs">1</text><use href="#pr" x="1320.9" y="238.9"/><text class="st" transform="translate(1324 228.8) rotate(-90)" font-size="9" textLength="5" lengthAdjust="spacingAndGlyphs">0</text><use href="#ps" x="1346.4" y="238.9"/><text class="st" transform="translate(1349.5 228.8) rotate(-90)" font-size="9" textLength="9.3" lengthAdjust="spacingAndGlyphs">14</text><use href="#pr" x="1359.4" y="238.9"/><text class="st" transform="translate(1362.5 228.8) rotate(-90)" font-size="9" textLength="9.3" lengthAdjust="spacingAndGlyphs">15</text><use href="#pr" x="1372.4" y="238.9"/><text class="st" transform="translate(1375.5 228.8) rotate(-90)" font-size="9" textLength="9.3" lengthAdjust="spacingAndGlyphs">16</text><use href="#pr" x="1385.4" y="238.9"/><text class="st" transform="translate(1388.5 228.8) rotate(-90)" font-size="9" textLength="9.3" lengthAdjust="spacingAndGlyphs">17</text><use href="#pr" x="1398.4" y="238.9"/><text class="st" transform="translate(1401.5 228.8) rotate(-90)" font-size="9" textLength="9.3" lengthAdjust="spacingAndGlyphs">18</text><use href="#pr" x="1411.4" y="238.9"/><text class="st" transform="translate(1414.5 228.8) rotate(-90)" font-size="9" textLength="9.3" lengthAdjust="spacingAndGlyphs">19</text><use href="#pr" x="1424.4" y="238.9"/><text class="st" transform="translate(1427.5 228.8) rotate(-90)" font-size="9" textLength="13.5" lengthAdjust="spacingAndGlyphs">SDA</text><use href="#pr" x="1437.4" y="238.9"/><text class="st" transform="translate(1440.5 228.8) rotate(-90)" font-size="9" textLength="13.5" lengthAdjust="spacingAndGlyphs">SCL</text><use href="#po" x="1225.6" y="262.5"/><use href="#po" x="1225.6" y="301"/><use href="#po" x="1238.6" y="262.5"/><use href="#po" x="1238.6" y="301"/><use href="#po" x="1251.5" y="262.5"/><use href="#po" x="1251.5" y="301"/><use href="#po" x="1264.5" y="262.5"/><use href="#po" x="1264.5" y="301"/><use href="#po" x="1277.5" y="262.5"/><use href="#po" x="1277.5" y="301"/><use href="#po" x="1290.4" y="262.5"/><use href="#po" x="1290.4" y="301"/><use href="#po" x="1303.4" y="262.5"/><use href="#po" x="1303.4" y="301"/><use href="#po" x="1316.4" y="262.5"/><use href="#pos" x="1316.4" y="301"/><text class="s" x="1307.6" y="276.9" font-size="7.8" textLength="13.3" lengthAdjust="spacingAndGlyphs">VCC</text><text class="s" x="1248" y="284.3" font-size="7.8" textLength="47.4" lengthAdjust="spacingAndGlyphs">U74HC595_2</text><text class="s" x="1221.2" y="292" font-size="7.8" textLength="14.6" lengthAdjust="spacingAndGlyphs">GND</text><use href="#po" x="1345.6" y="262.5"/><use href="#po" x="1345.6" y="301"/><use href="#po" x="1358.6" y="262.5"/><use href="#po" x="1358.6" y="301"/><use href="#po" x="1371.5" y="262.5"/><use href="#po" x="1371.5" y="301"/><use href="#po" x="1384.5" y="262.5"/><use href="#po" x="1384.5" y="301"/><use href="#po" x="1397.5" y="262.5"/><use href="#po" x="1397.5" y="301"/><use href="#po" x="1410.4" y="262.5"/><use href="#po" x="1410.4" y="301"/><use href="#po" x="1423.4" y="262.5"/><use href="#po" x="1423.4" y="301"/><use href="#po" x="1436.4" y="262.5"/><use href="#pos" x="1436.4" y="301"/><text class="s" x="1427.6" y="276.9" font-size="7.8" textLength="13.3" lengthAdjust="spacingAndGlyphs">VCC</text><text class="s" x="1371" y="284.3" font-size="7.8" textLength="47.4" lengthAdjust="spacingAndGlyphs">U74HC595_1</text><text class="s" x="1341.7" y="292" font-size="7.8" textLength="14.6" lengthAdjust="spacingAndGlyphs">GND</text><use href="#po" x="1274.9" y="422.8"/><use href="#po" x="1274.9" y="462.2"/><use href="#po" x="1287.9" y="422.8"/><use href="#po" x="1287.9" y="462.2"/><use href="#po" x="1300.9" y="422.8"/><use href="#po" x="1300.9" y="462.2"/><use href="#po" x="1313.9" y="422.8"/><use href="#po" x="1313.9" y="462.2"/><use href="#po" x="1326.9" y="422.8"/><use href="#po" x="1326.9" y="462.2"/><use href="#po" x="1339.9" y="422.8"/><use href="#po" x="1339.9" y="462.2"/><use href="#po" x="1352.9" y="422.8"/><use href="#po" x="1352.9" y="462.2"/><use href="#po" x="1365.9" y="422.8"/><use href="#pos" x="1365.9" y="462.2"/><text class="s" x="1356.8" y="437.7" font-size="7.8" textLength="13.3" lengthAdjust="spacingAndGlyphs">VCC</text><text class="s" x="1303.1" y="445" font-size="7.8" textLength="48.9" lengthAdjust="spacingAndGlyphs">U74HC595_3</text><text class="s" x="1270.7" y="452.7" font-size="7.8" textLength="14.6" lengthAdjust="spacingAndGlyphs">GND</text><use href="#ps" x="1255.7" y="485.9"/><text class="st" transform="translate(1258.8 506) rotate(-90)" font-size="9" textLength="9.5" lengthAdjust="spacingAndGlyphs">A0</text><use href="#pr" x="1268.7" y="485.9"/><text class="st" transform="translate(1271.8 506) rotate(-90)" font-size="9" textLength="9.5" lengthAdjust="spacingAndGlyphs">A1</text><use href="#pr" x="1281.7" y="485.9"/><text class="st" transform="translate(1284.8 506) rotate(-90)" font-size="9" textLength="9.5" lengthAdjust="spacingAndGlyphs">A2</text><use href="#pr" x="1294.7" y="485.9"/><text class="st" transform="translate(1297.8 506) rotate(-90)" font-size="9" textLength="9.5" lengthAdjust="spacingAndGlyphs">A3</text><use href="#pr" x="1307.7" y="485.9"/><text class="st" transform="translate(1310.8 506) rotate(-90)" font-size="9" textLength="9.5" lengthAdjust="spacingAndGlyphs">A4</text><use href="#pr" x="1320.7" y="485.9"/><text class="st" transform="translate(1323.8 506) rotate(-90)" font-size="9" textLength="9.5" lengthAdjust="spacingAndGlyphs">A5</text><use href="#pr" x="1333.7" y="485.9"/><text class="st" transform="translate(1336.8 506) rotate(-90)" font-size="9" textLength="9.5" lengthAdjust="spacingAndGlyphs">A6</text><use href="#pr" x="1346.7" y="485.9"/><text class="st" transform="translate(1349.8 506) rotate(-90)" font-size="9" textLength="9.5" lengthAdjust="spacingAndGlyphs">A7</text><use href="#ps" x="1372.5" y="485.9"/><text class="st" transform="translate(1375.6 506) rotate(-90)" font-size="9" textLength="9.5" lengthAdjust="spacingAndGlyphs">A8</text><use href="#pr" x="1385.5" y="485.9"/><text class="st" transform="translate(1388.6 506) rotate(-90)" font-size="9" textLength="9.5" lengthAdjust="spacingAndGlyphs">A9</text><use href="#pr" x="1398.5" y="485.9"/><text class="st" transform="translate(1401.6 510.3) rotate(-90)" font-size="9" textLength="13.8" lengthAdjust="spacingAndGlyphs">A10</text><use href="#pr" x="1411.5" y="485.9"/><text class="st" transform="translate(1414.6 510.3) rotate(-90)" font-size="9" textLength="13.8" lengthAdjust="spacingAndGlyphs">A11</text><use href="#pr" x="1424.5" y="485.9"/><text class="st" transform="translate(1427.6 510.3) rotate(-90)" font-size="9" textLength="13.8" lengthAdjust="spacingAndGlyphs">A12</text><use href="#pr" x="1437.5" y="485.9"/><text class="st" transform="translate(1440.6 510.3) rotate(-90)" font-size="9" textLength="13.8" lengthAdjust="spacingAndGlyphs">A13</text><use href="#pr" x="1450.5" y="485.9"/><text class="st" transform="translate(1453.6 510.3) rotate(-90)" font-size="9" textLength="13.8" lengthAdjust="spacingAndGlyphs">A14</text><use href="#pr" x="1463.5" y="485.9"/><text class="st" transform="translate(1466.6 510.3) rotate(-90)" font-size="9" textLength="13.8" lengthAdjust="spacingAndGlyphs">A15</text><use href="#pr" x="1476.6" y="238.9"/><use href="#ps" x="1489.6" y="238.9"/><text class="st" x="1448.7" y="243" font-size="11.9" textLength="16.5" lengthAdjust="spacingAndGlyphs">VCC</text><text class="st" x="1500.2" y="243" font-size="11.9" textLength="16.5" lengthAdjust="spacingAndGlyphs">VCC</text><use href="#pr" x="1476.6" y="251.9"/><use href="#pr" x="1489.6" y="251.9"/><text class="st" x="1454.7" y="256" font-size="11.9" textLength="10.5" lengthAdjust="spacingAndGlyphs">22</text><text class="st" x="1500.2" y="256" font-size="11.9" textLength="10.5" lengthAdjust="spacingAndGlyphs">23</text><use href="#pr" x="1476.6" y="264.9"/><use href="#pr" x="1489.6" y="264.9"/><text class="st" x="1454.7" y="269" font-size="11.9" textLength="10.5" lengthAdjust="spacingAndGlyphs">24</text><text class="st" x="1500.2" y="269" font-size="11.9" textLength="10.5" lengthAdjust="spacingAndGlyphs">25</text><use href="#pr" x="1476.6" y="277.9"/><use href="#pr" x="1489.6" y="277.9"/><text class="st" x="1454.7" y="282" font-size="11.9" textLength="10.5" lengthAdjust="spacingAndGlyphs">26</text><text class="st" x="1500.2" y="282" font-size="11.9" textLength="10.5" lengthAdjust="spacingAndGlyphs">27</text><use href="#pr" x="1476.6" y="290.9"/><use href="#pr" x="1489.6" y="290.9"/><text class="st" x="1454.7" y="295" font-size="11.9" textLength="10.5" lengthAdjust="spacingAndGlyphs">28</text><text class="st" x="1500.2" y="295" font-size="11.9" textLength="10.5" lengthAdjust="spacingAndGlyphs">29</text><use href="#pr" x="1476.6" y="303.9"/><use href="#pr" x="1489.6" y="303.9"/><text class="st" x="1454.7" y="308" font-size="11.9" textLength="10.5" lengthAdjust="spacingAndGlyphs">30</text><text class="st" x="1500.2" y="308" font-size="11.9" textLength="10.5" lengthAdjust="spacingAndGlyphs">31</text><use href="#pr" x="1476.6" y="316.9"/><use href="#pr" x="1489.6" y="316.9"/><text class="st" x="1454.7" y="321" font-size="11.9" textLength="10.5" lengthAdjust="spacingAndGlyphs">32</text><text class="st" x="1500.2" y="321" font-size="11.9" textLength="10.5" lengthAdjust="spacingAndGlyphs">33</text><use href="#pr" x="1476.6" y="329.9"/><use href="#pr" x="1489.6" y="329.9"/><text class="st" x="1454.7" y="334" font-size="11.9" textLength="10.5" lengthAdjust="spacingAndGlyphs">34</text><text class="st" x="1500.2" y="334" font-size="11.9" textLength="10.5" lengthAdjust="spacingAndGlyphs">35</text><use href="#pr" x="1476.6" y="342.9"/><use href="#pr" x="1489.6" y="342.9"/><text class="st" x="1454.7" y="347" font-size="11.9" textLength="10.5" lengthAdjust="spacingAndGlyphs">36</text><text class="st" x="1500.2" y="347" font-size="11.9" textLength="10.5" lengthAdjust="spacingAndGlyphs">37</text><use href="#pr" x="1476.6" y="355.9"/><use href="#pr" x="1489.6" y="355.9"/><text class="st" x="1454.7" y="360" font-size="11.9" textLength="10.5" lengthAdjust="spacingAndGlyphs">38</text><text class="st" x="1500.2" y="360" font-size="11.9" textLength="10.5" lengthAdjust="spacingAndGlyphs">39</text><use href="#pr" x="1476.6" y="368.9"/><use href="#pr" x="1489.6" y="368.9"/><text class="st" x="1454.7" y="373" font-size="11.9" textLength="10.5" lengthAdjust="spacingAndGlyphs">40</text><text class="st" x="1500.2" y="373" font-size="11.9" textLength="10.5" lengthAdjust="spacingAndGlyphs">41</text><use href="#pr" x="1476.6" y="381.9"/><use href="#pr" x="1489.6" y="381.9"/><text class="st" x="1454.7" y="386" font-size="11.9" textLength="10.5" lengthAdjust="spacingAndGlyphs">42</text><text class="st" x="1500.2" y="386" font-size="11.9" textLength="10.5" lengthAdjust="spacingAndGlyphs">43</text><use href="#pr" x="1476.6" y="394.9"/><use href="#pr" x="1489.6" y="394.9"/><text class="st" x="1454.7" y="399" font-size="11.9" textLength="10.5" lengthAdjust="spacingAndGlyphs">44</text><text class="st" x="1500.2" y="399" font-size="11.9" textLength="10.5" lengthAdjust="spacingAndGlyphs">45</text><use href="#pr" x="1476.6" y="407.9"/><use href="#pr" x="1489.6" y="407.9"/><text class="st" x="1454.7" y="412" font-size="11.9" textLength="10.5" lengthAdjust="spacingAndGlyphs">46</text><text class="st" x="1500.2" y="412" font-size="11.9" textLength="10.5" lengthAdjust="spacingAndGlyphs">47</text><use href="#pr" x="1476.6" y="420.9"/><use href="#pr" x="1489.6" y="420.9"/><text class="st" x="1454.7" y="425" font-size="11.9" textLength="10.5" lengthAdjust="spacingAndGlyphs">48</text><text class="st" x="1500.2" y="425" font-size="11.9" textLength="10.5" lengthAdjust="spacingAndGlyphs">49</text><use href="#pr" x="1476.6" y="433.9"/><use href="#pr" x="1489.6" y="433.9"/><text class="st" x="1454.7" y="438" font-size="11.9" textLength="10.5" lengthAdjust="spacingAndGlyphs">50</text><text class="st" x="1500.2" y="438" font-size="11.9" textLength="10.5" lengthAdjust="spacingAndGlyphs">51</text><use href="#pr" x="1476.6" y="446.9"/><use href="#pr" x="1489.6" y="446.9"/><text class="st" x="1454.7" y="451" font-size="11.9" textLength="10.5" lengthAdjust="spacingAndGlyphs">52</text><text class="st" x="1500.2" y="451" font-size="11.9" textLength="10.5" lengthAdjust="spacingAndGlyphs">53</text><use href="#pr" x="1476.6" y="459.9"/><use href="#pr" x="1489.6" y="459.9"/><text class="st" x="1448.7" y="464" font-size="11.9" textLength="16.5" lengthAdjust="spacingAndGlyphs">GND</text><text class="st" x="1500.2" y="464" font-size="11.9" textLength="16.5" lengthAdjust="spacingAndGlyphs">GND</text><text class="st" transform="translate(1526 429.8) rotate(-90)" font-size="15.6" textLength="151" lengthAdjust="spacingAndGlyphs">Arduino mega 2560</text><use href="#poh" x="1190.2" y="1389.6"/><use href="#poh" x="1229.1" y="1389.6"/><use href="#poh" x="1190.2" y="1402.6"/><use href="#poh" x="1229.1" y="1402.6"/><use href="#poh" x="1190.2" y="1415.6"/><use href="#poh" x="1229.1" y="1415.6"/><use href="#poh" x="1190.2" y="1428.6"/><use href="#poh" x="1229.1" y="1428.6"/><use href="#poh" x="1190.2" y="1441.6"/><use href="#poh" x="1229.1" y="1441.6"/><use href="#poh" x="1190.2" y="1454.6"/><use href="#poh" x="1229.1" y="1454.6"/><use href="#poh" x="1190.2" y="1467.6"/><use href="#poh" x="1229.1" y="1467.6"/><use href="#pohs" x="1190.2" y="1480.6"/><use href="#poh" x="1229.1" y="1480.6"/><text class="s" transform="translate(1199.9 1384) rotate(90)" font-size="7.8" textLength="15.3" lengthAdjust="spacingAndGlyphs">GND</text><text class="s" transform="translate(1207 1409) rotate(90)" font-size="7.8" textLength="51" lengthAdjust="spacingAndGlyphs">U74HC165_2</text><text class="s" transform="translate(1214.5 1470.3) rotate(90)" font-size="7.8" textLength="13.7" lengthAdjust="spacingAndGlyphs">VCC</text><use href="#poh" x="1190.2" y="1543"/><use href="#poh" x="1229.1" y="1543"/><use href="#poh" x="1190.2" y="1556"/><use href="#poh" x="1229.1" y="1556"/><use href="#poh" x="1190.2" y="1569"/><use href="#poh" x="1229.1" y="1569"/><use href="#poh" x="1190.2" y="1582"/><use href="#poh" x="1229.1" y="1582"/><use href="#poh" x="1190.2" y="1595"/><use href="#poh" x="1229.1" y="1595"/><use href="#poh" x="1190.2" y="1608"/><use href="#poh" x="1229.1" y="1608"/><use href="#poh" x="1190.2" y="1621"/><use href="#poh" x="1229.1" y="1621"/><use href="#pohs" x="1190.2" y="1634"/><use href="#poh" x="1229.1" y="1634"/><text class="s" transform="translate(1199.9 1537.4) rotate(90)" font-size="7.8" textLength="15.3" lengthAdjust="spacingAndGlyphs">GND</text><text class="s" transform="translate(1207 1562.4) rotate(90)" font-size="7.8" textLength="51" lengthAdjust="spacingAndGlyphs">U74HC165_1</text><text class="s" transform="translate(1214.5 1623.7) rotate(90)" font-size="7.8" textLength="13.7" lengthAdjust="spacingAndGlyphs">VCC</text>
<use href="#ps" x="1044.8" y="1064.4"/><use href="#pr" x="1044.8" y="1077.4"/><use href="#pr" x="1044.8" y="1090.4"/><use href="#pr" x="1044.8" y="1103.6"/><text class="s" transform="translate(1054.2 1063.8) rotate(90)" font-size="9.2" textLength="38.8" lengthAdjust="spacingAndGlyphs">(OUT) LCD</text><text class="s" transform="translate(1027.6 1047.9) rotate(90)" font-size="8.7" textLength="70.9" lengthAdjust="spacingAndGlyphs">VCC GND SCL SDA</text><use href="#ps" x="1044.8" y="1167.1"/><use href="#pr" x="1044.8" y="1179.9"/><use href="#pr" x="1044.8" y="1192.8"/><use href="#pr" x="1044.8" y="1205.7"/><text class="s" transform="translate(1054.7 1145) rotate(90)" font-size="9.4" textLength="80.6" lengthAdjust="spacingAndGlyphs">(IN) RUDDER PEDALS</text><text class="sb" transform="translate(1028.4 1153.3) rotate(90)" font-size="7.6" textLength="64" lengthAdjust="spacingAndGlyphs">VCC GND POT1 POT2</text><use href="#ps" x="1045" y="1260.7"/><use href="#pr" x="1045" y="1273.6"/><use href="#pr" x="1045" y="1286.7"/><use href="#pr" x="1045" y="1299.7"/><use href="#pr" x="1045" y="1312.8"/><text class="sb" transform="translate(1058.2 1245.2) rotate(90)" font-size="9.9" textLength="83.7" lengthAdjust="spacingAndGlyphs">(OUT) DISPLAYS 7SEG</text><text class="sb" transform="translate(1025.9 1253.5) rotate(90)" font-size="8.7" textLength="67.1" lengthAdjust="spacingAndGlyphs">VCC GND CLK CS DIN</text><rect class="ln" x="1030.300" y="1362.700" width="144.500" height="137.600"/><path class="ln" d="M1030.300 1431.300H1174.800"/><use href="#ps" x="1063.1" y="1384.4"/><use href="#pr" x="1063.1" y="1397.2"/><use href="#pr" x="1063.1" y="1410"/><use href="#ps" x="1133" y="1384.4"/><use href="#pr" x="1133" y="1397.2"/><use href="#pr" x="1133" y="1410"/><text class="sm" transform="translate(1073.8 1369) rotate(90)" font-size="12.1" textLength="58.1" lengthAdjust="spacingAndGlyphs">BRILLO 7SEG</text><text class="s" transform="translate(1046.6 1371) rotate(90)" font-size="8.7" textLength="52.4" lengthAdjust="spacingAndGlyphs">VCC GND POT</text><text class="sm" transform="translate(1143.3 1369) rotate(90)" font-size="12.1" textLength="58.1" lengthAdjust="spacingAndGlyphs">BRILLO LEDS</text><text class="s" transform="translate(1117 1371) rotate(90)" font-size="8.7" textLength="52.4" lengthAdjust="spacingAndGlyphs">VCC GND POT</text><text class="sm" transform="translate(1161.5 1440) rotate(90)" font-size="10.9" textLength="51" lengthAdjust="spacingAndGlyphs">DEV POWER</text><text class="sm" transform="translate(1151.8 1443.4) rotate(90)" font-size="10.9" textLength="44.4" lengthAdjust="spacingAndGlyphs">SELECTOR</text><use href="#ps" x="1137.4" y="1452.4"/><use href="#pr" x="1137.4" y="1465.4"/><use href="#pr" x="1137.4" y="1478.5"/><text class="sm" transform="translate(1110.9 1445.5) rotate(90)" font-size="12.1" textLength="40.6" lengthAdjust="spacingAndGlyphs">IN C OUT</text><path class="ln" d="M1113 1478.300H1093M1096.500 1476l-3.500 2.300 3.500 2.300z" fill="#eef4e6"/><text class="sm" transform="translate(1078.2 1439.3) rotate(90)" font-size="12.1" textLength="51.7" lengthAdjust="spacingAndGlyphs">OUT POWER</text><use href="#ps" x="1062.7" y="1459.2"/><use href="#pr" x="1062.7" y="1472"/><path class="ln" d="M1046.500 1457.900h7M1050 1454.400v7M1050 1471v6" stroke-width="1.300"/>
<text class="s" x="1595.4" y="221.9" font-size="24.6" textLength="69.2" lengthAdjust="spacingAndGlyphs">FRONT</text><text class="s" x="1679.3" y="221.9" font-size="24.6" textLength="46.4" lengthAdjust="spacingAndGlyphs">SIDE</text><text class="s" x="1149.6" y="405.8" font-size="25" textLength="92" lengthAdjust="spacingAndGlyphs">CAUTION</text><text class="s" x="1361.3" y="405.8" font-size="25" textLength="98.7" lengthAdjust="spacingAndGlyphs">WARNING</text><text class="s" x="1565.3" y="405.8" font-size="25" textLength="118.6" lengthAdjust="spacingAndGlyphs">AUTOPILOT</text><text class="s" x="1518" y="569.1" font-size="19.9" textLength="97.8" lengthAdjust="spacingAndGlyphs">AP-SPEED</text><text class="s" x="1521.8" y="590.1" font-size="19.9" textLength="73.3" lengthAdjust="spacingAndGlyphs">AP-THR</text><text class="s" x="1524.5" y="696.9" font-size="19.9" textLength="69.8" lengthAdjust="spacingAndGlyphs">AP-ALT</text><text class="s" x="1528" y="840.8" font-size="19.9" textLength="61" lengthAdjust="spacingAndGlyphs">AP-VS</text><text class="s" x="1522.4" y="998.7" font-size="19.9" textLength="73.6" lengthAdjust="spacingAndGlyphs">AP-NAV</text><text class="s" x="1520" y="1019.7" font-size="19.9" textLength="77.4" lengthAdjust="spacingAndGlyphs">AP-HDG</text><text class="s big" transform="translate(1026.2 249.3) rotate(90)" font-size="34.9" textLength="94.9" lengthAdjust="spacingAndGlyphs">PANEL</text><text class="s big" transform="translate(1026.2 361) rotate(90)" font-size="34.9" textLength="81.2" lengthAdjust="spacingAndGlyphs">FLIGHT</text><text class="s big" transform="translate(1026.2 462.5) rotate(90)" font-size="34.9" textLength="41.6" lengthAdjust="spacingAndGlyphs">PCB</text><text class="s big" transform="translate(1026.2 521.9) rotate(90)" font-size="34.9" textLength="57.3" lengthAdjust="spacingAndGlyphs">V2.0</text><text class="s big" transform="translate(1026.2 596.5) rotate(90)" font-size="32.7" textLength="26.9" lengthAdjust="spacingAndGlyphs">by</text><text class="s big" transform="translate(1026.2 642.2) rotate(90)" font-size="32.7" textLength="383.8" lengthAdjust="spacingAndGlyphs">apachebcn@gmail.com</text><text class="st" x="1541" y="1934.5" font-size="6.4" textLength="41.9" lengthAdjust="spacingAndGlyphs">JLCJLCJLCJLC</text><path class="ln" d="M1274.300 1703.200V1561.300H1746.700V1918.300H1183.600V1703.500H1746.700"/>
<circle cx="1035" cy="216" r="10.1" class="ring"/><circle cx="1035" cy="216" r="8.8" fill="#232b1c"/><circle cx="1035.7" cy="217.6" r="7.5" fill="url(#bg)"/><circle cx="1749.4" cy="215.3" r="10.1" class="ring"/><circle cx="1749.4" cy="215.3" r="8.8" fill="#232b1c"/><circle cx="1748.7" cy="216.9" r="7.5" fill="url(#bg)"/><circle cx="1034.8" cy="1927.6" r="10.1" class="ring"/><circle cx="1034.8" cy="1927.6" r="8.8" fill="#3a3c1c"/><circle cx="1035.5" cy="1926" r="7.5" fill="url(#bg)"/><circle cx="1749.5" cy="1927.4" r="10.1" class="ring"/><circle cx="1749.5" cy="1927.4" r="8.8" fill="#3a3c1c"/><circle cx="1748.8" cy="1925.8" r="7.5" fill="url(#bg)"/><circle cx="1301.4" cy="362.3" r="10.1" class="ring"/><circle cx="1301.4" cy="362.3" r="8.8" fill="#232b1c"/><circle cx="1301.6" cy="363.6" r="7.5" fill="url(#bg)"/><circle cx="1407.8" cy="362.3" r="10.1" class="ring"/><circle cx="1407.8" cy="362.3" r="8.8" fill="#232b1c"/><circle cx="1407.8" cy="363.6" r="7.5" fill="url(#bg)"/><circle cx="1668.2" cy="362.5" r="10.1" class="ring"/><circle cx="1668.2" cy="362.5" r="8.8" fill="#232b1c"/><circle cx="1667.7" cy="363.8" r="7.5" fill="url(#bg)"/><circle cx="1668.2" cy="1145.6" r="10.1" class="ring"/><circle cx="1668.2" cy="1145.6" r="8.8" fill="#232b1c"/><circle cx="1667.7" cy="1145.5" r="7.5" fill="url(#bg)"/><circle cx="1352.1" cy="1540.5" r="10.1" class="ring"/><circle cx="1352.1" cy="1540.5" r="8.8" fill="#3a3c1c"/><circle cx="1352.2" cy="1539.6" r="7.5" fill="url(#bg)"/><circle cx="1668.2" cy="1540.5" r="10.1" class="ring"/><circle cx="1668.2" cy="1540.5" r="8.8" fill="#3a3c1c"/><circle cx="1667.7" cy="1539.6" r="7.5" fill="url(#bg)"/>
<text class="s" x="1054.8" y="1922.3" font-size="19.9" textLength="27.3" lengthAdjust="spacingAndGlyphs">TH1</text><text class="s" x="1126.8" y="1922.3" font-size="19.9" textLength="28" lengthAdjust="spacingAndGlyphs">TH2</text><text class="st" transform="translate(1036.1 1867.1) rotate(-90)" font-size="12.1" textLength="44.2" lengthAdjust="spacingAndGlyphs">RV1 10K</text><text class="st" transform="translate(1176.2 1867.1) rotate(-90)" font-size="12.1" textLength="44.2" lengthAdjust="spacingAndGlyphs">RV2 10K</text><rect class="ln" x="1039.1" y="1507.200" width="52.800" height="397.600"/><rect x="1039.9" y="1511.600" width="49.400" height="396" fill="#9a5428"/><rect x="1039.9" y="1513" width="48" height="394" fill="#4c4c46"/><rect x="1039.9" y="1517.100" width="45.400" height="395" rx="3" fill="#fdfdfd"/><path d="M1040.4 1517.100l3.500 3.500M1084.8 1517.100l-3.500 3.500" stroke="#8a93b8" stroke-width="1.200"/><rect x="1057.1" y="1535.800" width="9.700" height="359.100" fill="#777"/><circle cx="1062" cy="1528.400" r="2.900" fill="#555"/><circle cx="1062.1" cy="1901.700" r="2.500" fill="#555"/><path d="M1060.1 1858H1064.9V1885L1057.7 1899V1877.600H1052.4z" fill="#161616"/><rect x="1052.4" y="1877.600" width="5.5" height="25" fill="#858585"/><rect class="ln" x="1112.3" y="1507.200" width="52.800" height="397.600"/><rect x="1113.1" y="1511.600" width="49.400" height="396" fill="#9a5428"/><rect x="1113.1" y="1513" width="48" height="394" fill="#4c4c46"/><rect x="1113.1" y="1517.100" width="45.400" height="395" rx="3" fill="#fdfdfd"/><path d="M1113.6 1517.100l3.500 3.500M1158 1517.100l-3.500 3.500" stroke="#8a93b8" stroke-width="1.200"/><rect x="1130.3" y="1535.800" width="9.700" height="359.100" fill="#777"/><circle cx="1135.2" cy="1528.400" r="2.900" fill="#555"/><circle cx="1135.3" cy="1901.700" r="2.500" fill="#555"/><path d="M1133.7 1858H1138.1V1885L1130.9 1899V1877.600H1126.8z" fill="#161616"/><rect x="1126.8" y="1877.600" width="4.3" height="25" fill="#858585"/>
<text class="sb" x="1627.8" y="519.8" font-size="15.8" textLength="81.7" lengthAdjust="spacingAndGlyphs">SET SPEED</text><text class="sb" x="1617.1" y="531.7" font-size="8.7" textLength="101.2" lengthAdjust="spacingAndGlyphs">ENCODER (PINS 34,32,36)</text><text class="sb" x="1639.4" y="663.1" font-size="15.8" textLength="58.3" lengthAdjust="spacingAndGlyphs">SET ALT</text><text class="sb" x="1617.1" y="675" font-size="8.7" textLength="101.2" lengthAdjust="spacingAndGlyphs">ENCODER (PINS 28,26,30)</text><text class="sb" x="1642.8" y="806.5" font-size="15.8" textLength="51.6" lengthAdjust="spacingAndGlyphs">SET VS</text><text class="sb" x="1617.1" y="818.4" font-size="8.7" textLength="101.2" lengthAdjust="spacingAndGlyphs">ENCODER (PINS 22,23,24)</text><text class="sb" x="1636.7" y="949.9" font-size="15.8" textLength="63.8" lengthAdjust="spacingAndGlyphs">SET HDG</text><text class="sb" x="1617.1" y="961.7" font-size="8.7" textLength="101.2" lengthAdjust="spacingAndGlyphs">ENCODER (PINS 27,29,25)</text><text class="sb" x="1649.4" y="1235.5" font-size="15.8" textLength="38.3" lengthAdjust="spacingAndGlyphs">BARO</text><text class="sb" x="1619.1" y="1247.3" font-size="8.7" textLength="101.2" lengthAdjust="spacingAndGlyphs">ENCODER (PINS 33,35,31)</text><text class="s" x="1317.6" y="1428.9" font-size="19.5" textLength="76.8" lengthAdjust="spacingAndGlyphs">AILERON</text><text class="sb" x="1302.7" y="1439" font-size="8.7" textLength="101.2" lengthAdjust="spacingAndGlyphs">ENCODER (PINS 51,49,53)</text><text class="s" x="1477.5" y="1428.9" font-size="19.5" textLength="73.8" lengthAdjust="spacingAndGlyphs">RUDDER</text><text class="sb" x="1463.6" y="1439" font-size="8.7" textLength="101.2" lengthAdjust="spacingAndGlyphs">ENCODER (PINS 45,43,47)</text><text class="s" x="1624.3" y="1428.9" font-size="19.5" textLength="88.2" lengthAdjust="spacingAndGlyphs">ELEVATOR</text><text class="sb" x="1620.6" y="1439" font-size="8.7" textLength="101.2" lengthAdjust="spacingAndGlyphs">ENCODER (PINS 39,37,41)</text><text class="sb" x="1493.1" y="1404.9" font-size="17" textLength="43.6" lengthAdjust="spacingAndGlyphs">TRIMS</text><rect class="ln" x="1279.300" y="1386.400" width="464.500" height="132.800"/><path class="ln" d="M1279.300 1410.500H1743.800M1437.900 1410.500V1519.200M1590.400 1410.500V1519.200"/><rect x="1659.9" y="539.1" width="17.300" height="4.400" fill="#f2e722"/><rect x="1663.4" y="540.7" width="10.500" height="2.400" fill="#3a3a2a"/><rect x="1659.9" y="602.7" width="17.300" height="4.400" fill="#f2e722"/><rect x="1663.4" y="603.1" width="10.500" height="2.400" fill="#3a3a2a"/><rect x="1623.9" y="554.5" width="10.400" height="10.400" fill="#f2e722"/><circle cx="1629.1" cy="559.7" r="2.200" fill="#2a2410"/><circle cx="1629.1" cy="572.7" r="5.200" fill="#f2e722"/><circle cx="1629.1" cy="572.7" r="2.200" fill="#2a2410"/><circle cx="1629.1" cy="585.9" r="5.200" fill="#f2e722"/><circle cx="1629.1" cy="585.9" r="2.200" fill="#2a2410"/><circle cx="1705.2" cy="559.7" r="5.200" fill="#f2e722"/><circle cx="1705.2" cy="559.7" r="2.200" fill="#2a2410"/><circle cx="1705.2" cy="585.9" r="5.200" fill="#f2e722"/><circle cx="1705.2" cy="585.9" r="2.200" fill="#2a2410"/><rect class="ln" x="1637.3" y="542.7" width="62.600" height="60.600"/><rect x="1639.9" y="541.9" width="58.600" height="60.200" rx="2" fill="#1f3524"/><rect x="1630.6" y="554.8" width="11.500" height="5.800" fill="#cdcdcd"/><rect x="1630.6" y="567.8" width="11.500" height="5.800" fill="#cdcdcd"/><rect x="1630.6" y="581" width="11.500" height="5.800" fill="#cdcdcd"/><rect x="1698.2" y="554.8" width="8" height="5.800" fill="#f0f0f0"/><rect x="1698.2" y="581" width="8" height="5.800" fill="#f0f0f0"/><rect x="1641.8" y="538.3" width="58.600" height="60.200" rx="3.500" fill="#d3d2d3"/><rect x="1665.3" y="538.3" width="11.600" height="60.200" fill="#a9a9a9"/><rect x="1641.8" y="565.4" width="2.600" height="9.500" fill="#9a9a9a"/><circle cx="1671.1" cy="567.6" r="20" fill="#8a8a8a"/><circle cx="1672.3" cy="565.6" r="17.200" fill="#9d9d9d"/><circle cx="1673.4" cy="563.6" r="14.600" fill="#7e7e7e"/><path d="M1674.5 561.6L1680.5 551.5" stroke="#1d1d1d" stroke-width="27" stroke-linecap="round"/><circle cx="1680.5" cy="551.5" r="14.700" fill="#c6c6c6"/><circle cx="1680.5" cy="551.5" r="14.500" fill="none" stroke="#1d1d1d" stroke-width="2" stroke-dasharray="1.600 1.750"/><circle cx="1680.5" cy="551.5" r="13.400" fill="#b4b4b4"/><path d="M1685.5 538.4A14 14 0 0 1 1685.5 564.6Z" fill="#cdcdcd"/><path d="M1685.5 538.4L1685.5 564.6L1681.9 570.6L1681.9 544.5Z" fill="#1d1d1d"/><rect x="1659.9" y="682.4" width="17.300" height="4.400" fill="#f2e722"/><rect x="1663.4" y="684" width="10.500" height="2.400" fill="#3a3a2a"/><rect x="1659.9" y="746" width="17.300" height="4.400" fill="#f2e722"/><rect x="1663.4" y="746.4" width="10.500" height="2.400" fill="#3a3a2a"/><rect x="1623.9" y="697.8" width="10.400" height="10.400" fill="#f2e722"/><circle cx="1629.1" cy="703" r="2.200" fill="#2a2410"/><circle cx="1629.1" cy="716" r="5.200" fill="#f2e722"/><circle cx="1629.1" cy="716" r="2.200" fill="#2a2410"/><circle cx="1629.1" cy="729.2" r="5.200" fill="#f2e722"/><circle cx="1629.1" cy="729.2" r="2.200" fill="#2a2410"/><circle cx="1705.2" cy="703" r="5.200" fill="#f2e722"/><circle cx="1705.2" cy="703" r="2.200" fill="#2a2410"/><circle cx="1705.2" cy="729.2" r="5.200" fill="#f2e722"/><circle cx="1705.2" cy="729.2" r="2.200" fill="#2a2410"/><rect class="ln" x="1637.3" y="686" width="62.600" height="60.600"/><rect x="1639.9" y="685.5" width="58.600" height="60.200" rx="2" fill="#1f3524"/><rect x="1630.6" y="698.7" width="11.500" height="5.800" fill="#cdcdcd"/><rect x="1630.6" y="711.7" width="11.500" height="5.800" fill="#cdcdcd"/><rect x="1630.6" y="724.9" width="11.500" height="5.800" fill="#cdcdcd"/><rect x="1698.2" y="698.7" width="8" height="5.800" fill="#f0f0f0"/><rect x="1698.2" y="724.9" width="8" height="5.800" fill="#f0f0f0"/><rect x="1641.8" y="682.9" width="58.600" height="60.200" rx="3.500" fill="#d3d2d3"/><rect x="1665.3" y="682.9" width="11.600" height="60.200" fill="#a9a9a9"/><rect x="1641.8" y="710" width="2.600" height="9.500" fill="#9a9a9a"/><circle cx="1671.1" cy="712.2" r="20" fill="#8a8a8a"/><circle cx="1672.3" cy="710.8" r="17.200" fill="#9d9d9d"/><circle cx="1673.4" cy="709.4" r="14.600" fill="#7e7e7e"/><path d="M1674.5 708L1680.5 701" stroke="#1d1d1d" stroke-width="27" stroke-linecap="round"/><circle cx="1680.5" cy="701" r="14.700" fill="#c6c6c6"/><circle cx="1680.5" cy="701" r="14.500" fill="none" stroke="#1d1d1d" stroke-width="2" stroke-dasharray="1.600 1.750"/><circle cx="1680.5" cy="701" r="13.400" fill="#b4b4b4"/><path d="M1685.5 687.9A14 14 0 0 1 1685.5 714.1Z" fill="#cdcdcd"/><path d="M1685.5 687.9L1685.5 714.1L1681.9 718.3L1681.9 692.1Z" fill="#1d1d1d"/><rect x="1659.9" y="825.8" width="17.300" height="4.400" fill="#f2e722"/><rect x="1663.4" y="827.4" width="10.500" height="2.400" fill="#3a3a2a"/><rect x="1659.9" y="889.4" width="17.300" height="4.400" fill="#f2e722"/><rect x="1663.4" y="889.8" width="10.500" height="2.400" fill="#3a3a2a"/><rect x="1623.9" y="841.1" width="10.400" height="10.400" fill="#f2e722"/><circle cx="1629.1" cy="846.4" r="2.200" fill="#2a2410"/><circle cx="1629.1" cy="859.4" r="5.200" fill="#f2e722"/><circle cx="1629.1" cy="859.4" r="2.200" fill="#2a2410"/><circle cx="1629.1" cy="872.5" r="5.200" fill="#f2e722"/><circle cx="1629.1" cy="872.5" r="2.200" fill="#2a2410"/><circle cx="1705.2" cy="846.4" r="5.200" fill="#f2e722"/><circle cx="1705.2" cy="846.4" r="2.200" fill="#2a2410"/><circle cx="1705.2" cy="872.5" r="5.200" fill="#f2e722"/><circle cx="1705.2" cy="872.5" r="2.200" fill="#2a2410"/><rect class="ln" x="1637.3" y="829.4" width="62.600" height="60.600"/><rect x="1639.9" y="829.1" width="58.600" height="60.200" rx="2" fill="#1f3524"/><rect x="1630.6" y="842.6" width="11.500" height="5.800" fill="#cdcdcd"/><rect x="1630.6" y="855.6" width="11.500" height="5.800" fill="#cdcdcd"/><rect x="1630.6" y="868.8" width="11.500" height="5.800" fill="#cdcdcd"/><rect x="1698.2" y="842.6" width="8" height="5.800" fill="#f0f0f0"/><rect x="1698.2" y="868.8" width="8" height="5.800" fill="#f0f0f0"/><rect x="1641.8" y="827.6" width="58.600" height="60.200" rx="3.500" fill="#d3d2d3"/><rect x="1665.3" y="827.6" width="11.600" height="60.200" fill="#a9a9a9"/><rect x="1641.8" y="854.7" width="2.600" height="9.500" fill="#9a9a9a"/><circle cx="1671.1" cy="856.9" r="20" fill="#8a8a8a"/><circle cx="1672.3" cy="856.1" r="17.200" fill="#9d9d9d"/><circle cx="1673.4" cy="855.2" r="14.600" fill="#7e7e7e"/><path d="M1674.5 854.4L1680.5 850.5" stroke="#1d1d1d" stroke-width="27" stroke-linecap="round"/><circle cx="1680.5" cy="850.5" r="14.700" fill="#c6c6c6"/><circle cx="1680.5" cy="850.5" r="14.500" fill="none" stroke="#1d1d1d" stroke-width="2" stroke-dasharray="1.600 1.750"/><circle cx="1680.5" cy="850.5" r="13.400" fill="#b4b4b4"/><path d="M1685.5 837.5A14 14 0 0 1 1685.5 863.6Z" fill="#cdcdcd"/><path d="M1685.5 837.5L1685.5 863.6L1681.9 865.9L1681.9 839.8Z" fill="#1d1d1d"/><rect x="1659.9" y="969.1" width="17.300" height="4.400" fill="#f2e722"/><rect x="1663.4" y="970.7" width="10.500" height="2.400" fill="#3a3a2a"/><rect x="1659.9" y="1032.7" width="17.300" height="4.400" fill="#f2e722"/><rect x="1663.4" y="1033.1" width="10.500" height="2.400" fill="#3a3a2a"/><rect x="1623.9" y="984.5" width="10.400" height="10.400" fill="#f2e722"/><circle cx="1629.1" cy="989.7" r="2.200" fill="#2a2410"/><circle cx="1629.1" cy="1002.7" r="5.200" fill="#f2e722"/><circle cx="1629.1" cy="1002.7" r="2.200" fill="#2a2410"/><circle cx="1629.1" cy="1015.9" r="5.200" fill="#f2e722"/><circle cx="1629.1" cy="1015.9" r="2.200" fill="#2a2410"/><circle cx="1705.2" cy="989.7" r="5.200" fill="#f2e722"/><circle cx="1705.2" cy="989.7" r="2.200" fill="#2a2410"/><circle cx="1705.2" cy="1015.9" r="5.200" fill="#f2e722"/><circle cx="1705.2" cy="1015.9" r="2.200" fill="#2a2410"/><rect class="ln" x="1637.3" y="972.7" width="62.600" height="60.600"/><rect x="1639.9" y="972.8" width="58.600" height="60.200" rx="2" fill="#1f3524"/><rect x="1630.6" y="986.5" width="11.500" height="5.800" fill="#cdcdcd"/><rect x="1630.6" y="999.5" width="11.500" height="5.800" fill="#cdcdcd"/><rect x="1630.6" y="1012.7" width="11.500" height="5.800" fill="#cdcdcd"/><rect x="1698.2" y="986.5" width="8" height="5.800" fill="#f0f0f0"/><rect x="1698.2" y="1012.7" width="8" height="5.800" fill="#f0f0f0"/><rect x="1641.8" y="972.3" width="58.600" height="60.200" rx="3.500" fill="#d3d2d3"/><rect x="1665.3" y="972.3" width="11.600" height="60.200" fill="#a9a9a9"/><rect x="1641.8" y="999.4" width="2.600" height="9.500" fill="#9a9a9a"/><circle cx="1671.1" cy="1001.6" r="20" fill="#8a8a8a"/><circle cx="1672.3" cy="1001.3" r="17.200" fill="#9d9d9d"/><circle cx="1673.4" cy="1001" r="14.600" fill="#7e7e7e"/><path d="M1674.5 1000.7L1680.5 1000.1" stroke="#1d1d1d" stroke-width="27" stroke-linecap="round"/><circle cx="1680.5" cy="1000.1" r="14.700" fill="#c6c6c6"/><circle cx="1680.5" cy="1000.1" r="14.500" fill="none" stroke="#1d1d1d" stroke-width="2" stroke-dasharray="1.600 1.750"/><circle cx="1680.5" cy="1000.1" r="13.400" fill="#b4b4b4"/><path d="M1685.5 987A14 14 0 0 1 1685.5 1013.1Z" fill="#cdcdcd"/><path d="M1685.5 987L1685.5 1013.1L1681.9 1013.5L1681.9 987.4Z" fill="#1d1d1d"/><rect x="1659.9" y="1254.7" width="17.300" height="4.400" fill="#f2e722"/><rect x="1663.4" y="1256.3" width="10.500" height="2.400" fill="#3a3a2a"/><rect x="1659.9" y="1318.3" width="17.300" height="4.400" fill="#f2e722"/><rect x="1663.4" y="1318.7" width="10.500" height="2.400" fill="#3a3a2a"/><rect x="1623.9" y="1270.1" width="10.400" height="10.400" fill="#f2e722"/><circle cx="1629.1" cy="1275.3" r="2.200" fill="#2a2410"/><circle cx="1629.1" cy="1288.3" r="5.200" fill="#f2e722"/><circle cx="1629.1" cy="1288.3" r="2.200" fill="#2a2410"/><circle cx="1629.1" cy="1301.5" r="5.200" fill="#f2e722"/><circle cx="1629.1" cy="1301.5" r="2.200" fill="#2a2410"/><circle cx="1705.2" cy="1275.3" r="5.200" fill="#f2e722"/><circle cx="1705.2" cy="1275.3" r="2.200" fill="#2a2410"/><circle cx="1705.2" cy="1301.5" r="5.200" fill="#f2e722"/><circle cx="1705.2" cy="1301.5" r="2.200" fill="#2a2410"/><rect class="ln" x="1637.3" y="1258.3" width="62.600" height="60.600"/><rect x="1639.9" y="1258.9" width="58.600" height="60.200" rx="2" fill="#1f3524"/><rect x="1630.6" y="1273.3" width="11.500" height="5.800" fill="#cdcdcd"/><rect x="1630.6" y="1286.3" width="11.500" height="5.800" fill="#cdcdcd"/><rect x="1630.6" y="1299.5" width="11.500" height="5.800" fill="#cdcdcd"/><rect x="1698.2" y="1273.3" width="8" height="5.800" fill="#f0f0f0"/><rect x="1698.2" y="1299.5" width="8" height="5.800" fill="#f0f0f0"/><rect x="1641.8" y="1260.5" width="58.600" height="60.200" rx="3.500" fill="#d3d2d3"/><rect x="1665.3" y="1260.5" width="11.600" height="60.200" fill="#a9a9a9"/><rect x="1641.8" y="1287.6" width="2.600" height="9.500" fill="#9a9a9a"/><circle cx="1671.1" cy="1289.8" r="20" fill="#8a8a8a"/><circle cx="1672.3" cy="1290.7" r="17.200" fill="#9d9d9d"/><circle cx="1673.4" cy="1291.5" r="14.600" fill="#7e7e7e"/><path d="M1674.5 1292.4L1680.5 1297.9" stroke="#1d1d1d" stroke-width="27" stroke-linecap="round"/><circle cx="1680.5" cy="1297.9" r="14.700" fill="#c6c6c6"/><circle cx="1680.5" cy="1297.9" r="14.500" fill="none" stroke="#1d1d1d" stroke-width="2" stroke-dasharray="1.600 1.750"/><circle cx="1680.5" cy="1297.9" r="13.400" fill="#b4b4b4"/><path d="M1685.5 1284.9A14 14 0 0 1 1685.5 1311Z" fill="#cdcdcd"/><path d="M1685.5 1284.9L1685.5 1311L1681.9 1307.7L1681.9 1281.5Z" fill="#1d1d1d"/><rect x="1343.8" y="1444.4" width="17.300" height="4.400" fill="#f2e722"/><rect x="1347.3" y="1446" width="10.500" height="2.400" fill="#3a3a2a"/><rect x="1343.8" y="1508" width="17.300" height="4.400" fill="#f2e722"/><rect x="1347.3" y="1508.5" width="10.500" height="2.400" fill="#3a3a2a"/><rect x="1386.8" y="1486.4" width="10.400" height="10.400" fill="#f2e722"/><circle cx="1392" cy="1491.6" r="2.200" fill="#2a2410"/><circle cx="1392" cy="1478.6" r="5.200" fill="#f2e722"/><circle cx="1392" cy="1478.6" r="2.200" fill="#2a2410"/><circle cx="1392" cy="1465.4" r="5.200" fill="#f2e722"/><circle cx="1392" cy="1465.4" r="2.200" fill="#2a2410"/><circle cx="1315.9" cy="1491.6" r="5.200" fill="#f2e722"/><circle cx="1315.9" cy="1491.6" r="2.200" fill="#2a2410"/><circle cx="1315.9" cy="1465.4" r="5.200" fill="#f2e722"/><circle cx="1315.9" cy="1465.4" r="2.200" fill="#2a2410"/><rect class="ln" x="1321.2" y="1448" width="62.600" height="60.600"/><rect x="1323.1" y="1449.1" width="58.600" height="60.200" rx="2" fill="#1f3524"/><rect x="1379" y="1490.4" width="11.500" height="5.800" fill="#cdcdcd"/><rect x="1379" y="1477.4" width="11.500" height="5.800" fill="#cdcdcd"/><rect x="1379" y="1464.2" width="11.500" height="5.800" fill="#cdcdcd"/><rect x="1314.9" y="1490.4" width="8" height="5.800" fill="#f0f0f0"/><rect x="1314.9" y="1464.2" width="8" height="5.800" fill="#f0f0f0"/><rect x="1322.8" y="1452" width="58.600" height="60.200" rx="3.500" fill="#d3d2d3"/><rect x="1346.3" y="1452" width="11.600" height="60.200" fill="#a9a9a9"/><rect x="1378.8" y="1479.1" width="2.600" height="9.500" fill="#9a9a9a"/><circle cx="1352.1" cy="1481.3" r="20" fill="#8a8a8a"/><circle cx="1352" cy="1482.9" r="17.200" fill="#9d9d9d"/><circle cx="1351.8" cy="1484.5" r="14.600" fill="#7e7e7e"/><path d="M1351.7 1486.2L1350.8 1495.8" stroke="#1d1d1d" stroke-width="27" stroke-linecap="round"/><circle cx="1350.8" cy="1495.8" r="14.700" fill="#c6c6c6"/><circle cx="1350.8" cy="1495.8" r="14.500" fill="none" stroke="#1d1d1d" stroke-width="2" stroke-dasharray="1.600 1.750"/><circle cx="1350.8" cy="1495.8" r="13.400" fill="#adadad"/><path d="M1345.8 1482.8A14 14 0 0 0 1345.8 1508.9Z" fill="#c4c4c4"/><path d="M1345.8 1482.8L1345.8 1508.9L1346.3 1503.1L1346.3 1477Z" fill="#1d1d1d"/><rect x="1501.8" y="1444.4" width="17.300" height="4.400" fill="#f2e722"/><rect x="1505.3" y="1446" width="10.500" height="2.400" fill="#3a3a2a"/><rect x="1501.8" y="1508" width="17.300" height="4.400" fill="#f2e722"/><rect x="1505.3" y="1508.5" width="10.500" height="2.400" fill="#3a3a2a"/><rect x="1544.8" y="1486.4" width="10.400" height="10.400" fill="#f2e722"/><circle cx="1550" cy="1491.6" r="2.200" fill="#2a2410"/><circle cx="1550" cy="1478.6" r="5.200" fill="#f2e722"/><circle cx="1550" cy="1478.6" r="2.200" fill="#2a2410"/><circle cx="1550" cy="1465.4" r="5.200" fill="#f2e722"/><circle cx="1550" cy="1465.4" r="2.200" fill="#2a2410"/><circle cx="1473.9" cy="1491.6" r="5.200" fill="#f2e722"/><circle cx="1473.9" cy="1491.6" r="2.200" fill="#2a2410"/><circle cx="1473.9" cy="1465.4" r="5.200" fill="#f2e722"/><circle cx="1473.9" cy="1465.4" r="2.200" fill="#2a2410"/><rect class="ln" x="1479.2" y="1448" width="62.600" height="60.600"/><rect x="1481.4" y="1449.1" width="58.600" height="60.200" rx="2" fill="#1f3524"/><rect x="1537" y="1490.4" width="11.500" height="5.800" fill="#cdcdcd"/><rect x="1537" y="1477.4" width="11.500" height="5.800" fill="#cdcdcd"/><rect x="1537" y="1464.2" width="11.500" height="5.800" fill="#cdcdcd"/><rect x="1472.9" y="1490.4" width="8" height="5.800" fill="#f0f0f0"/><rect x="1472.9" y="1464.2" width="8" height="5.800" fill="#f0f0f0"/><rect x="1482.3" y="1452" width="58.600" height="60.200" rx="3.500" fill="#d3d2d3"/><rect x="1505.8" y="1452" width="11.600" height="60.200" fill="#a9a9a9"/><rect x="1538.3" y="1479.1" width="2.600" height="9.500" fill="#9a9a9a"/><circle cx="1511.6" cy="1481.3" r="20" fill="#8a8a8a"/><circle cx="1512.1" cy="1482.9" r="17.200" fill="#9d9d9d"/><circle cx="1512.5" cy="1484.5" r="14.600" fill="#7e7e7e"/><path d="M1513 1486.2L1515.6 1495.8" stroke="#1d1d1d" stroke-width="27" stroke-linecap="round"/><circle cx="1515.6" cy="1495.8" r="14.700" fill="#c6c6c6"/><circle cx="1515.6" cy="1495.8" r="14.500" fill="none" stroke="#1d1d1d" stroke-width="2" stroke-dasharray="1.600 1.750"/><circle cx="1515.6" cy="1495.8" r="13.400" fill="#adadad"/><path d="M1510.6 1482.8A14 14 0 0 0 1510.6 1508.9Z" fill="#c4c4c4"/><path d="M1510.6 1482.8L1510.6 1508.9L1509 1503.1L1509 1477Z" fill="#1d1d1d"/><rect x="1659.9" y="1444.4" width="17.300" height="4.400" fill="#f2e722"/><rect x="1663.4" y="1446" width="10.500" height="2.400" fill="#3a3a2a"/><rect x="1659.9" y="1508" width="17.300" height="4.400" fill="#f2e722"/><rect x="1663.4" y="1508.5" width="10.500" height="2.400" fill="#3a3a2a"/><rect x="1702.9" y="1486.4" width="10.400" height="10.400" fill="#f2e722"/><circle cx="1708.1" cy="1491.6" r="2.200" fill="#2a2410"/><circle cx="1708.1" cy="1478.6" r="5.200" fill="#f2e722"/><circle cx="1708.1" cy="1478.6" r="2.200" fill="#2a2410"/><circle cx="1708.1" cy="1465.4" r="5.200" fill="#f2e722"/><circle cx="1708.1" cy="1465.4" r="2.200" fill="#2a2410"/><circle cx="1632" cy="1491.6" r="5.200" fill="#f2e722"/><circle cx="1632" cy="1491.6" r="2.200" fill="#2a2410"/><circle cx="1632" cy="1465.4" r="5.200" fill="#f2e722"/><circle cx="1632" cy="1465.4" r="2.200" fill="#2a2410"/><rect class="ln" x="1637.3" y="1448" width="62.600" height="60.600"/><rect x="1639.9" y="1449.1" width="58.600" height="60.200" rx="2" fill="#1f3524"/><rect x="1695.1" y="1490.4" width="11.500" height="5.800" fill="#cdcdcd"/><rect x="1695.1" y="1477.4" width="11.500" height="5.800" fill="#cdcdcd"/><rect x="1695.1" y="1464.2" width="11.500" height="5.800" fill="#cdcdcd"/><rect x="1631" y="1490.4" width="8" height="5.800" fill="#f0f0f0"/><rect x="1631" y="1464.2" width="8" height="5.800" fill="#f0f0f0"/><rect x="1641.8" y="1452" width="58.600" height="60.200" rx="3.500" fill="#d3d2d3"/><rect x="1665.3" y="1452" width="11.600" height="60.200" fill="#a9a9a9"/><rect x="1697.8" y="1479.1" width="2.600" height="9.500" fill="#9a9a9a"/><circle cx="1671.1" cy="1481.3" r="20" fill="#8a8a8a"/><circle cx="1672.3" cy="1482.9" r="17.200" fill="#9d9d9d"/><circle cx="1673.4" cy="1484.5" r="14.600" fill="#7e7e7e"/><path d="M1674.5 1486.2L1680.5 1495.8" stroke="#1d1d1d" stroke-width="27" stroke-linecap="round"/><circle cx="1680.5" cy="1495.8" r="14.700" fill="#c6c6c6"/><circle cx="1680.5" cy="1495.8" r="14.500" fill="none" stroke="#1d1d1d" stroke-width="2" stroke-dasharray="1.600 1.750"/><circle cx="1680.5" cy="1495.8" r="13.400" fill="#adadad"/><path d="M1675.5 1482.8A14 14 0 0 0 1675.5 1508.9Z" fill="#c4c4c4"/><path d="M1675.5 1482.8L1675.5 1508.9L1671.9 1503.1L1671.9 1477Z" fill="#1d1d1d"/>
<text class="s" x="1284.5" y="1586.6" font-size="19.9" textLength="72.2" lengthAdjust="spacingAndGlyphs">BEACON</text><text class="st" x="1294.7" y="1628.7" font-size="8.6" textLength="51.5" lengthAdjust="spacingAndGlyphs">LED (Bit-14)</text><text class="st" x="1290.1" y="1700.9" font-size="8.6" textLength="60.6" lengthAdjust="spacingAndGlyphs">Switch (Bit-12)</text><text class="s" x="1397" y="1586.6" font-size="19.9" textLength="36.6" lengthAdjust="spacingAndGlyphs">TAXI</text><text class="st" x="1389.2" y="1628.7" font-size="8.6" textLength="51.5" lengthAdjust="spacingAndGlyphs">LED (Bit-15)</text><text class="st" x="1387" y="1700.9" font-size="8.6" textLength="56" lengthAdjust="spacingAndGlyphs">Switch (Bit-8)</text><text class="s" x="1487.9" y="1586.6" font-size="19.9" textLength="45.3" lengthAdjust="spacingAndGlyphs">LAND</text><text class="st" x="1483.9" y="1628.7" font-size="8.6" textLength="51.5" lengthAdjust="spacingAndGlyphs">LED (Bit-16)</text><text class="st" x="1481.6" y="1700.9" font-size="8.6" textLength="56" lengthAdjust="spacingAndGlyphs">Switch (Bit-9)</text><text class="s" x="1589" y="1586.6" font-size="19.9" textLength="32.8" lengthAdjust="spacingAndGlyphs">NAV</text><text class="st" x="1578.5" y="1628.7" font-size="8.6" textLength="51.5" lengthAdjust="spacingAndGlyphs">LED (Bit-17)</text><text class="st" x="1573.9" y="1700.9" font-size="8.6" textLength="60.6" lengthAdjust="spacingAndGlyphs">Switch (Bit-10)</text><text class="s" x="1664.7" y="1586.6" font-size="19.9" textLength="70.8" lengthAdjust="spacingAndGlyphs">STROBE</text><text class="st" x="1673.1" y="1628.7" font-size="8.6" textLength="51.5" lengthAdjust="spacingAndGlyphs">LED (Bit-18)</text><text class="st" x="1668.5" y="1700.9" font-size="8.6" textLength="60.6" lengthAdjust="spacingAndGlyphs">Switch (Bit-11)</text><text class="s" x="1414.7" y="1727.8" font-size="19.9" textLength="89.5" lengthAdjust="spacingAndGlyphs">SPOILERS</text><text class="st" x="1432.8" y="1770" font-size="8.6" textLength="51.9" lengthAdjust="spacingAndGlyphs">LED (Bit-11)</text><text class="st" x="1430.8" y="1842.4" font-size="8.6" textLength="56" lengthAdjust="spacingAndGlyphs">Switch (Bit-0)</text><text class="s" x="1534.5" y="1727.8" font-size="19.9" textLength="54.9" lengthAdjust="spacingAndGlyphs">FLAPS</text><text class="st" x="1534.7" y="1770" font-size="8.6" textLength="51.9" lengthAdjust="spacingAndGlyphs">LED (Bit-12)</text><text class="st" x="1532.7" y="1842.4" font-size="8.6" textLength="56" lengthAdjust="spacingAndGlyphs">Switch (Bit-1)</text><text class="s" x="1635.1" y="1727.8" font-size="19.9" textLength="58.5" lengthAdjust="spacingAndGlyphs">GEARS</text><text class="st" x="1636.6" y="1770" font-size="8.6" textLength="51.9" lengthAdjust="spacingAndGlyphs">LED (Bit-13)</text><text class="st" x="1634.5" y="1842.4" font-size="8.6" textLength="56" lengthAdjust="spacingAndGlyphs">Switch (Bit-2)</text><text class="s" x="1214.2" y="1801.3" font-size="19.9" textLength="81.2" lengthAdjust="spacingAndGlyphs">REVERSE</text><text class="s" x="1327.5" y="1801.3" font-size="19.9" textLength="58.9" lengthAdjust="spacingAndGlyphs">BRAKE</text><text class="st" x="1231.2" y="1843.4" font-size="8.6" textLength="47.5" lengthAdjust="spacingAndGlyphs">LED (Bit-9)</text><text class="st" x="1330.8" y="1843.4" font-size="8.6" textLength="51.9" lengthAdjust="spacingAndGlyphs">LED (Bit-10)</text><text class="st" x="1227" y="1915.2" font-size="8.6" textLength="56" lengthAdjust="spacingAndGlyphs">Switch (Bit-3)</text><text class="st" x="1328.9" y="1915.2" font-size="8.6" textLength="56" lengthAdjust="spacingAndGlyphs">Switch (Bit-4)</text><text class="st" x="1430.8" y="1915.2" font-size="8.6" textLength="56" lengthAdjust="spacingAndGlyphs">Switch (Bit-5)</text><text class="st" x="1532.7" y="1915.2" font-size="8.6" textLength="56" lengthAdjust="spacingAndGlyphs">Switch (Bit-6)</text><text class="st" x="1634.6" y="1915.2" font-size="8.6" textLength="56" lengthAdjust="spacingAndGlyphs">Switch (Bit-7)</text><ellipse cx="1286.2" cy="1649.3" rx="5.600" ry="4.800" fill="#f2e722"/><rect x="1284" y="1648.3" width="8" height="4.400" rx="1.800" fill="#e9e9ec"/><ellipse cx="1286.2" cy="1675" rx="5.600" ry="4.800" fill="#f2e722"/><rect x="1284" y="1674" width="8" height="4.400" rx="1.800" fill="#e9e9ec"/><ellipse cx="1355.6" cy="1649.3" rx="5.600" ry="4.800" fill="#f2e722"/><rect x="1349.8" y="1648.3" width="8" height="4.400" rx="1.800" fill="#e9e9ec"/><ellipse cx="1355.6" cy="1675" rx="5.600" ry="4.800" fill="#f2e722"/><rect x="1349.8" y="1674" width="8" height="4.400" rx="1.800" fill="#e9e9ec"/><rect class="ln" x="1289" y="1630.5" width="63.800" height="63.200" stroke-opacity="0.800"/><rect x="1291.1" y="1633.6" width="59.300" height="59.300" fill="#15180f"/><rect x="1290.9" y="1635.1" width="59.300" height="59.300" rx="2.500" fill="#fdfdfd"/><circle cx="1320.6" cy="1664.8" r="18.400" fill="url(#gBtn)"/><circle cx="1320.2" cy="1668.2" r="14.350" fill="#fefefe"/><ellipse cx="1380.8" cy="1649.3" rx="5.600" ry="4.800" fill="#f2e722"/><rect x="1378.6" y="1648.3" width="8" height="4.400" rx="1.800" fill="#e9e9ec"/><ellipse cx="1380.8" cy="1675" rx="5.600" ry="4.800" fill="#f2e722"/><rect x="1378.6" y="1674" width="8" height="4.400" rx="1.800" fill="#e9e9ec"/><ellipse cx="1450.2" cy="1649.3" rx="5.600" ry="4.800" fill="#f2e722"/><rect x="1444.4" y="1648.3" width="8" height="4.400" rx="1.800" fill="#e9e9ec"/><ellipse cx="1450.2" cy="1675" rx="5.600" ry="4.800" fill="#f2e722"/><rect x="1444.4" y="1674" width="8" height="4.400" rx="1.800" fill="#e9e9ec"/><rect class="ln" x="1383.6" y="1630.5" width="63.800" height="63.200" stroke-opacity="0.800"/><rect x="1385.9" y="1633.6" width="59.300" height="59.300" fill="#15180f"/><rect x="1386" y="1635.1" width="59.300" height="59.300" rx="2.500" fill="#fdfdfd"/><circle cx="1415.6" cy="1664.8" r="18.400" fill="url(#gBtn)"/><circle cx="1415.7" cy="1668.2" r="14.350" fill="#fefefe"/><ellipse cx="1475.4" cy="1649.3" rx="5.600" ry="4.800" fill="#f2e722"/><rect x="1473.2" y="1648.3" width="8" height="4.400" rx="1.800" fill="#e9e9ec"/><ellipse cx="1475.4" cy="1675" rx="5.600" ry="4.800" fill="#f2e722"/><rect x="1473.2" y="1674" width="8" height="4.400" rx="1.800" fill="#e9e9ec"/><ellipse cx="1544.8" cy="1649.3" rx="5.600" ry="4.800" fill="#f2e722"/><rect x="1539" y="1648.3" width="8" height="4.400" rx="1.800" fill="#e9e9ec"/><ellipse cx="1544.8" cy="1675" rx="5.600" ry="4.800" fill="#f2e722"/><rect x="1539" y="1674" width="8" height="4.400" rx="1.800" fill="#e9e9ec"/><rect class="ln" x="1478.2" y="1630.5" width="63.800" height="63.200" stroke-opacity="0.800"/><rect x="1480.7" y="1633.6" width="59.300" height="59.300" fill="#15180f"/><rect x="1481" y="1635.1" width="59.300" height="59.300" rx="2.500" fill="#fdfdfd"/><circle cx="1510.6" cy="1664.8" r="18.400" fill="url(#gBtn)"/><circle cx="1511.3" cy="1668.2" r="14.350" fill="#fefefe"/><ellipse cx="1570" cy="1649.3" rx="5.600" ry="4.800" fill="#f2e722"/><rect x="1567.8" y="1648.3" width="8" height="4.400" rx="1.800" fill="#e9e9ec"/><ellipse cx="1570" cy="1675" rx="5.600" ry="4.800" fill="#f2e722"/><rect x="1567.8" y="1674" width="8" height="4.400" rx="1.800" fill="#e9e9ec"/><ellipse cx="1639.4" cy="1649.3" rx="5.600" ry="4.800" fill="#f2e722"/><rect x="1633.6" y="1648.3" width="8" height="4.400" rx="1.800" fill="#e9e9ec"/><ellipse cx="1639.4" cy="1675" rx="5.600" ry="4.800" fill="#f2e722"/><rect x="1633.6" y="1674" width="8" height="4.400" rx="1.800" fill="#e9e9ec"/><rect class="ln" x="1572.8" y="1630.5" width="63.800" height="63.200" stroke-opacity="0.800"/><rect x="1575.5" y="1633.6" width="59.300" height="59.300" fill="#15180f"/><rect x="1576" y="1635.1" width="59.300" height="59.300" rx="2.500" fill="#fdfdfd"/><circle cx="1605.7" cy="1664.8" r="18.400" fill="url(#gBtn)"/><circle cx="1606.9" cy="1668.2" r="14.350" fill="#fefefe"/><ellipse cx="1664.6" cy="1649.3" rx="5.600" ry="4.800" fill="#f2e722"/><rect x="1662.4" y="1648.3" width="8" height="4.400" rx="1.800" fill="#e9e9ec"/><ellipse cx="1664.6" cy="1675" rx="5.600" ry="4.800" fill="#f2e722"/><rect x="1662.4" y="1674" width="8" height="4.400" rx="1.800" fill="#e9e9ec"/><ellipse cx="1734" cy="1649.3" rx="5.600" ry="4.800" fill="#f2e722"/><rect x="1728.2" y="1648.3" width="8" height="4.400" rx="1.800" fill="#e9e9ec"/><ellipse cx="1734" cy="1675" rx="5.600" ry="4.800" fill="#f2e722"/><rect x="1728.2" y="1674" width="8" height="4.400" rx="1.800" fill="#e9e9ec"/><rect class="ln" x="1667.4" y="1630.5" width="63.800" height="63.200" stroke-opacity="0.800"/><rect x="1670.3" y="1633.6" width="59.300" height="59.300" fill="#15180f"/><rect x="1671" y="1635.1" width="59.300" height="59.300" rx="2.500" fill="#fdfdfd"/><circle cx="1700.7" cy="1664.8" r="18.400" fill="url(#gBtn)"/><circle cx="1702.4" cy="1668" r="14.350" fill="#fefefe"/><ellipse cx="1424.5" cy="1789.4" rx="5.600" ry="4.800" fill="#f2e722"/><rect x="1422.3" y="1788.7" width="8" height="4.400" rx="1.800" fill="#e9e9ec"/><ellipse cx="1424.5" cy="1815.1" rx="5.600" ry="4.800" fill="#f2e722"/><rect x="1422.3" y="1814.4" width="8" height="4.400" rx="1.800" fill="#e9e9ec"/><ellipse cx="1494" cy="1789.4" rx="5.600" ry="4.800" fill="#f2e722"/><rect x="1488.2" y="1788.7" width="8" height="4.400" rx="1.800" fill="#e9e9ec"/><ellipse cx="1494" cy="1815.1" rx="5.600" ry="4.800" fill="#f2e722"/><rect x="1488.2" y="1814.4" width="8" height="4.400" rx="1.800" fill="#e9e9ec"/><rect class="ln" x="1427.3" y="1770.6" width="63.800" height="63.200" stroke-opacity="0.800"/><rect x="1429.7" y="1774" width="59.300" height="59.300" fill="#15180f"/><rect x="1429.9" y="1775.8" width="59.300" height="59.300" rx="2.500" fill="#fdfdfd"/><circle cx="1459.6" cy="1805.5" r="18.400" fill="url(#gBtn)"/><circle cx="1459.9" cy="1809.2" r="14.350" fill="#fefefe"/><ellipse cx="1526.5" cy="1789.4" rx="5.600" ry="4.800" fill="#f2e722"/><rect x="1524.2" y="1788.7" width="8" height="4.400" rx="1.800" fill="#e9e9ec"/><ellipse cx="1526.5" cy="1815.1" rx="5.600" ry="4.800" fill="#f2e722"/><rect x="1524.2" y="1814.4" width="8" height="4.400" rx="1.800" fill="#e9e9ec"/><ellipse cx="1595.9" cy="1789.4" rx="5.600" ry="4.800" fill="#f2e722"/><rect x="1590.1" y="1788.7" width="8" height="4.400" rx="1.800" fill="#e9e9ec"/><ellipse cx="1595.9" cy="1815.1" rx="5.600" ry="4.800" fill="#f2e722"/><rect x="1590.1" y="1814.4" width="8" height="4.400" rx="1.800" fill="#e9e9ec"/><rect class="ln" x="1529.2" y="1770.6" width="63.800" height="63.200" stroke-opacity="0.800"/><rect x="1531.8" y="1774" width="59.300" height="59.300" fill="#15180f"/><rect x="1532.3" y="1775.8" width="59.300" height="59.300" rx="2.500" fill="#fdfdfd"/><circle cx="1561.9" cy="1805.5" r="18.400" fill="url(#gBtn)"/><circle cx="1562.7" cy="1809.1" r="14.350" fill="#fefefe"/><ellipse cx="1628.3" cy="1789.4" rx="5.600" ry="4.800" fill="#f2e722"/><rect x="1626.1" y="1788.7" width="8" height="4.400" rx="1.800" fill="#e9e9ec"/><ellipse cx="1628.3" cy="1815.1" rx="5.600" ry="4.800" fill="#f2e722"/><rect x="1626.1" y="1814.4" width="8" height="4.400" rx="1.800" fill="#e9e9ec"/><ellipse cx="1697.8" cy="1789.4" rx="5.600" ry="4.800" fill="#f2e722"/><rect x="1692" y="1788.7" width="8" height="4.400" rx="1.800" fill="#e9e9ec"/><ellipse cx="1697.8" cy="1815.1" rx="5.600" ry="4.800" fill="#f2e722"/><rect x="1692" y="1814.4" width="8" height="4.400" rx="1.800" fill="#e9e9ec"/><rect class="ln" x="1631.1" y="1770.6" width="63.800" height="63.200" stroke-opacity="0.800"/><rect x="1633.9" y="1774" width="59.300" height="59.300" fill="#15180f"/><rect x="1634.6" y="1775.8" width="59.300" height="59.300" rx="2.500" fill="#fdfdfd"/><circle cx="1664.3" cy="1805.5" r="18.400" fill="url(#gBtn)"/><circle cx="1665.6" cy="1809" r="14.350" fill="#fefefe"/><ellipse cx="1220.8" cy="1862.7" rx="5.600" ry="4.800" fill="#f2e722"/><rect x="1218.5" y="1862.1" width="8" height="4.400" rx="1.800" fill="#e9e9ec"/><ellipse cx="1220.8" cy="1888.4" rx="5.600" ry="4.800" fill="#f2e722"/><rect x="1218.5" y="1887.8" width="8" height="4.400" rx="1.800" fill="#e9e9ec"/><ellipse cx="1290.2" cy="1862.7" rx="5.600" ry="4.800" fill="#f2e722"/><rect x="1284.4" y="1862.1" width="8" height="4.400" rx="1.800" fill="#e9e9ec"/><ellipse cx="1290.2" cy="1888.4" rx="5.600" ry="4.800" fill="#f2e722"/><rect x="1284.4" y="1887.8" width="8" height="4.400" rx="1.800" fill="#e9e9ec"/><rect class="ln" x="1223.5" y="1843.9" width="63.800" height="63.200" stroke-opacity="0.800"/><rect x="1225.5" y="1847.5" width="59.300" height="59.300" fill="#15180f"/><rect x="1225.2" y="1849.5" width="59.300" height="59.300" rx="2.500" fill="#fdfdfd"/><circle cx="1254.8" cy="1879.1" r="18.400" fill="url(#gBtn)"/><circle cx="1254.2" cy="1882.8" r="14.350" fill="#fefefe"/><ellipse cx="1322.7" cy="1862.7" rx="5.600" ry="4.800" fill="#f2e722"/><rect x="1320.5" y="1862.1" width="8" height="4.400" rx="1.800" fill="#e9e9ec"/><ellipse cx="1322.7" cy="1888.4" rx="5.600" ry="4.800" fill="#f2e722"/><rect x="1320.5" y="1887.8" width="8" height="4.400" rx="1.800" fill="#e9e9ec"/><ellipse cx="1392.1" cy="1862.7" rx="5.600" ry="4.800" fill="#f2e722"/><rect x="1386.3" y="1862.1" width="8" height="4.400" rx="1.800" fill="#e9e9ec"/><ellipse cx="1392.1" cy="1888.4" rx="5.600" ry="4.800" fill="#f2e722"/><rect x="1386.3" y="1887.8" width="8" height="4.400" rx="1.800" fill="#e9e9ec"/><rect class="ln" x="1325.5" y="1843.9" width="63.800" height="63.200" stroke-opacity="0.800"/><rect x="1327.6" y="1847.5" width="59.300" height="59.300" fill="#15180f"/><rect x="1327.5" y="1849.5" width="59.300" height="59.300" rx="2.500" fill="#fdfdfd"/><circle cx="1357.2" cy="1879.1" r="18.400" fill="url(#gBtn)"/><circle cx="1357" cy="1882.8" r="14.350" fill="#fefefe"/><ellipse cx="1424.5" cy="1862.7" rx="5.600" ry="4.800" fill="#f2e722"/><rect x="1422.3" y="1862.1" width="8" height="4.400" rx="1.800" fill="#e9e9ec"/><ellipse cx="1424.5" cy="1888.4" rx="5.600" ry="4.800" fill="#f2e722"/><rect x="1422.3" y="1887.8" width="8" height="4.400" rx="1.800" fill="#e9e9ec"/><ellipse cx="1494" cy="1862.7" rx="5.600" ry="4.800" fill="#f2e722"/><rect x="1488.2" y="1862.1" width="8" height="4.400" rx="1.800" fill="#e9e9ec"/><ellipse cx="1494" cy="1888.4" rx="5.600" ry="4.800" fill="#f2e722"/><rect x="1488.2" y="1887.8" width="8" height="4.400" rx="1.800" fill="#e9e9ec"/><rect class="ln" x="1427.3" y="1843.9" width="63.800" height="63.200" stroke-opacity="0.800"/><rect x="1429.7" y="1847.5" width="59.300" height="59.300" fill="#15180f"/><rect x="1429.9" y="1849.5" width="59.300" height="59.300" rx="2.500" fill="#fdfdfd"/><circle cx="1459.6" cy="1879.1" r="18.400" fill="url(#gBtn)"/><circle cx="1459.9" cy="1882.8" r="14.350" fill="#fefefe"/><ellipse cx="1526.5" cy="1862.7" rx="5.600" ry="4.800" fill="#f2e722"/><rect x="1524.2" y="1862.1" width="8" height="4.400" rx="1.800" fill="#e9e9ec"/><ellipse cx="1526.5" cy="1888.4" rx="5.600" ry="4.800" fill="#f2e722"/><rect x="1524.2" y="1887.8" width="8" height="4.400" rx="1.800" fill="#e9e9ec"/><ellipse cx="1595.9" cy="1862.7" rx="5.600" ry="4.800" fill="#f2e722"/><rect x="1590.1" y="1862.1" width="8" height="4.400" rx="1.800" fill="#e9e9ec"/><ellipse cx="1595.9" cy="1888.4" rx="5.600" ry="4.800" fill="#f2e722"/><rect x="1590.1" y="1887.8" width="8" height="4.400" rx="1.800" fill="#e9e9ec"/><rect class="ln" x="1529.2" y="1843.9" width="63.800" height="63.200" stroke-opacity="0.800"/><rect x="1531.8" y="1847.5" width="59.300" height="59.300" fill="#15180f"/><rect x="1532.3" y="1849.5" width="59.300" height="59.300" rx="2.500" fill="#fdfdfd"/><circle cx="1561.9" cy="1879.1" r="18.400" fill="url(#gBtn)"/><circle cx="1562.7" cy="1882.7" r="14.350" fill="#fefefe"/><ellipse cx="1628.4" cy="1862.7" rx="5.600" ry="4.800" fill="#f2e722"/><rect x="1626.2" y="1862.1" width="8" height="4.400" rx="1.800" fill="#e9e9ec"/><ellipse cx="1628.4" cy="1888.4" rx="5.600" ry="4.800" fill="#f2e722"/><rect x="1626.2" y="1887.8" width="8" height="4.400" rx="1.800" fill="#e9e9ec"/><ellipse cx="1697.8" cy="1862.7" rx="5.600" ry="4.800" fill="#f2e722"/><rect x="1692" y="1862.1" width="8" height="4.400" rx="1.800" fill="#e9e9ec"/><ellipse cx="1697.8" cy="1888.4" rx="5.600" ry="4.800" fill="#f2e722"/><rect x="1692" y="1887.8" width="8" height="4.400" rx="1.800" fill="#e9e9ec"/><rect class="ln" x="1631.2" y="1843.9" width="63.800" height="63.200" stroke-opacity="0.800"/><rect x="1633.9" y="1847.5" width="59.300" height="59.300" fill="#15180f"/><rect x="1634.6" y="1849.5" width="59.300" height="59.300" rx="2.500" fill="#fdfdfd"/><circle cx="1664.3" cy="1879.1" r="18.400" fill="url(#gBtn)"/><circle cx="1665.5" cy="1882.6" r="14.350" fill="#fefefe"/>
<text class="st" x="1172.3" y="448.2" font-size="8.6" textLength="46.4" lengthAdjust="spacingAndGlyphs">(LED BIT-6)</text><text class="st" x="1386.8" y="448.2" font-size="8.6" textLength="46.4" lengthAdjust="spacingAndGlyphs">(LED BIT-1)</text><text class="st" x="1601.4" y="448.2" font-size="8.6" textLength="46.4" lengthAdjust="spacingAndGlyphs">(LED BIT-2)</text><text class="st" x="1536" y="521" font-size="8.6" textLength="46.4" lengthAdjust="spacingAndGlyphs">(LED BIT-3)</text><text class="st" x="1536" y="632.2" font-size="8.6" textLength="46.4" lengthAdjust="spacingAndGlyphs">(LED BIT-4)</text><text class="st" x="1536" y="739.2" font-size="8.6" textLength="46.4" lengthAdjust="spacingAndGlyphs">(LED BIT-5)</text><text class="st" x="1536" y="882.5" font-size="8.6" textLength="46.4" lengthAdjust="spacingAndGlyphs">(LED BIT-7)</text><text class="st" x="1536" y="949.4" font-size="8.6" textLength="46.4" lengthAdjust="spacingAndGlyphs">(LED BIT-0)</text><text class="st" x="1536" y="1061.7" font-size="8.6" textLength="46.4" lengthAdjust="spacingAndGlyphs">(LED BIT-8)</text><circle class="lnt" cx="1195.5" cy="425.1" r="14"/><circle class="lnt" cx="1195.5" cy="425.1" r="11.800"/><path class="lnt" d="M1211.5 424.1h5M1214 421.6v5" stroke-width="1.100"/><g transform="translate(1193.4 418.3) rotate(-106.9)"><path d="M3.3 13.2A13.6 13.6 0 1 1 3.3 -13.2L15 -10.3A10.6 10.6 0 0 1 15 10.3Z" fill="url(#gLr)"/><ellipse cx="0.800" rx="14.900" ry="13.800" fill="none" stroke="#f28a32" stroke-width="1.700"/><ellipse cx="13.5" cy="-2" rx="5" ry="3.500" fill="#fff" opacity="0.160"/></g><circle class="lnt" cx="1410" cy="425.1" r="14"/><circle class="lnt" cx="1410" cy="425.1" r="11.800"/><path class="lnt" d="M1426 424.1h5M1428.5 421.6v5" stroke-width="1.100"/><g transform="translate(1410.2 418.3) rotate(-88.4)"><path d="M3.4 13.2A13.6 13.6 0 1 1 3.4 -13.2L14.6 -10.3A10.6 10.6 0 0 1 14.6 10.3Z" fill="url(#gLr)"/><ellipse cx="0.800" rx="14.900" ry="13.800" fill="none" stroke="#f28a32" stroke-width="1.700"/><ellipse cx="13" cy="-2" rx="5" ry="3.500" fill="#fff" opacity="0.160"/></g><circle class="lnt" cx="1624.6" cy="425.1" r="14"/><circle class="lnt" cx="1624.6" cy="425.1" r="11.800"/><path class="lnt" d="M1640.6 424.1h5M1643.1 421.6v5" stroke-width="1.100"/><g transform="translate(1627 418.3) rotate(-70.2)"><path d="M3.2 13.2A13.6 13.6 0 1 1 3.2 -13.2L15.2 -10.3A10.6 10.6 0 0 1 15.2 10.3Z" fill="url(#gLb)"/><ellipse cx="0.800" rx="14.900" ry="13.800" fill="none" stroke="#9fe0fa" stroke-width="1.700"/><ellipse cx="13.7" cy="-2" rx="5" ry="3.500" fill="#fff" opacity="0.160"/></g><circle class="lnt" cx="1559.2" cy="539.2" r="14"/><circle class="lnt" cx="1559.2" cy="539.2" r="11.800"/><path class="lnt" d="M1575.2 538.2h5M1577.7 535.7v5" stroke-width="1.100"/><g transform="translate(1561 533.6) rotate(-72.6)"><path d="M4 13A13.6 13.6 0 1 1 4 -13L13.4 -10.1A10.6 10.6 0 0 1 13.4 10.1Z" fill="url(#gLr)"/><ellipse cx="0.800" rx="14.900" ry="13.800" fill="none" stroke="#f28a32" stroke-width="1.700"/><ellipse cx="11.3" cy="-2" rx="5" ry="3.500" fill="#fff" opacity="0.160"/></g><circle class="lnt" cx="1559.2" cy="610" r="14"/><circle class="lnt" cx="1559.2" cy="610" r="11.800"/><path class="lnt" d="M1575.2 609h5M1577.7 606.5v5" stroke-width="1.100"/><g transform="translate(1561 605.2) rotate(-70.1)"><path d="M4.5 12.8A13.6 13.6 0 1 1 4.5 -12.8L12.6 -10A10.6 10.6 0 0 1 12.6 10Z" fill="url(#gLb)"/><ellipse cx="0.800" rx="14.900" ry="13.800" fill="none" stroke="#9fe0fa" stroke-width="1.700"/><ellipse cx="10.1" cy="-2" rx="5" ry="3.500" fill="#fff" opacity="0.160"/></g><circle class="lnt" cx="1559.2" cy="716.3" r="14"/><circle class="lnt" cx="1559.2" cy="716.3" r="11.800"/><path class="lnt" d="M1575.2 715.3h5M1577.7 712.8v5" stroke-width="1.100"/><g transform="translate(1561 712.6) rotate(-64.8)"><path d="M5.6 12.4A13.6 13.6 0 1 1 5.6 -12.4L11.6 -9.7A10.6 10.6 0 0 1 11.6 9.7Z" fill="url(#gLb)"/><ellipse cx="0.800" rx="14.900" ry="13.800" fill="none" stroke="#9fe0fa" stroke-width="1.700"/><ellipse cx="8.3" cy="-2" rx="5" ry="3.500" fill="#fff" opacity="0.160"/></g><circle class="lnt" cx="1559.2" cy="859.5" r="14"/><circle class="lnt" cx="1559.2" cy="859.5" r="11.800"/><path class="lnt" d="M1575.2 858.5h5M1577.7 856v5" stroke-width="1.100"/><g transform="translate(1561 857.3) rotate(-51.7)"><path d="M8.2 10.9A13.6 13.6 0 1 1 8.2 -10.9L11.4 -8.5A10.6 10.6 0 0 1 11.4 8.5Z" fill="url(#gLb)"/><ellipse cx="0.800" rx="14.900" ry="13.800" fill="none" stroke="#9fe0fa" stroke-width="1.700"/><ellipse cx="6" cy="-2" rx="5" ry="3.500" fill="#fff" opacity="0.160"/></g><circle class="lnt" cx="1559.2" cy="966.6" r="14"/><circle class="lnt" cx="1559.2" cy="966.6" r="11.800"/><path class="lnt" d="M1575.2 965.6h5M1577.7 963.1v5" stroke-width="1.100"/><g transform="translate(1561 965.5) rotate(-32.1)"><path d="M11.2 7.8A13.6 13.6 0 1 1 11.2 -7.8L12.4 -6A10.6 10.6 0 0 1 12.4 6Z" fill="url(#gLb)"/><ellipse cx="0.800" rx="14.900" ry="13.800" fill="none" stroke="#9fe0fa" stroke-width="1.700"/><ellipse cx="4.7" cy="-2" rx="5" ry="3.500" fill="#fff" opacity="0.160"/></g><circle class="lnt" cx="1559.2" cy="1038.4" r="14"/><circle class="lnt" cx="1559.2" cy="1038.4" r="11.800"/><path class="lnt" d="M1575.2 1037.4h5M1577.7 1034.9v5" stroke-width="1.100"/><g transform="translate(1561 1038.1) rotate(-11.2)"><path d="M12.9 4.2A13.6 13.6 0 1 1 12.9 -4.2L13.2 -3.3A10.6 10.6 0 0 1 13.2 3.3Z" fill="url(#gLb)"/><ellipse cx="0.800" rx="14.900" ry="13.800" fill="none" stroke="#9fe0fa" stroke-width="1.700"/><ellipse cx="4.2" cy="-2" rx="5" ry="3.500" fill="#fff" opacity="0.160"/></g>
<circle class="lnt" cx="1321.6" cy="1603.6" r="14"/><circle class="lnt" cx="1321.6" cy="1603.6" r="11.800"/><path class="lnt" d="M1337.6 1602.6h5M1340.1 1600.1v5" stroke-width="1.100"/><g transform="translate(1320.9 1609.2) rotate(97.5)"><path d="M4.1 13A13.6 13.6 0 1 1 4.1 -13L13.1 -10.1A10.6 10.6 0 0 1 13.1 10.1Z" fill="url(#gLy)"/><ellipse cx="0.800" rx="14.900" ry="13.800" fill="none" stroke="#f3f26a" stroke-width="1.700"/><ellipse cx="10.9" cy="-2" rx="5" ry="3.500" fill="#fff" opacity="0.160"/></g><circle class="lnt" cx="1416.2" cy="1603.6" r="14"/><circle class="lnt" cx="1416.2" cy="1603.6" r="11.800"/><path class="lnt" d="M1432.2 1602.6h5M1434.7 1600.1v5" stroke-width="1.100"/><g transform="translate(1416.5 1609.2) rotate(87.4)"><path d="M4.1 13A13.6 13.6 0 1 1 4.1 -13L13.1 -10.1A10.6 10.6 0 0 1 13.1 10.1Z" fill="url(#gLy)"/><ellipse cx="0.800" rx="14.900" ry="13.800" fill="none" stroke="#f3f26a" stroke-width="1.700"/><ellipse cx="10.9" cy="-2" rx="5" ry="3.500" fill="#fff" opacity="0.160"/></g><circle class="lnt" cx="1510.8" cy="1603.6" r="14"/><circle class="lnt" cx="1510.8" cy="1603.6" r="11.800"/><path class="lnt" d="M1526.8 1602.6h5M1529.3 1600.1v5" stroke-width="1.100"/><g transform="translate(1512 1609.2) rotate(77.4)"><path d="M4 13A13.6 13.6 0 1 1 4 -13L13.2 -10.1A10.6 10.6 0 0 1 13.2 10.1Z" fill="url(#gLy)"/><ellipse cx="0.800" rx="14.900" ry="13.800" fill="none" stroke="#f3f26a" stroke-width="1.700"/><ellipse cx="11.1" cy="-2" rx="5" ry="3.500" fill="#fff" opacity="0.160"/></g><circle class="lnt" cx="1605.4" cy="1603.6" r="14"/><circle class="lnt" cx="1605.4" cy="1603.6" r="11.800"/><path class="lnt" d="M1621.4 1602.6h5M1623.9 1600.1v5" stroke-width="1.100"/><g transform="translate(1607.6 1609.2) rotate(68.1)"><path d="M3.8 13A13.6 13.6 0 1 1 3.8 -13L13.6 -10.2A10.6 10.6 0 0 1 13.6 10.2Z" fill="url(#gLy)"/><ellipse cx="0.800" rx="14.900" ry="13.800" fill="none" stroke="#f3f26a" stroke-width="1.700"/><ellipse cx="11.6" cy="-2" rx="5" ry="3.500" fill="#fff" opacity="0.160"/></g><circle class="lnt" cx="1700" cy="1603.6" r="14"/><circle class="lnt" cx="1700" cy="1603.6" r="11.800"/><path class="lnt" d="M1716 1602.6h5M1718.5 1600.1v5" stroke-width="1.100"/><g transform="translate(1703.2 1609.2) rotate(59.9)"><path d="M3.6 13.1A13.6 13.6 0 1 1 3.6 -13.1L14.2 -10.2A10.6 10.6 0 0 1 14.2 10.2Z" fill="url(#gLy)"/><ellipse cx="0.800" rx="14.900" ry="13.800" fill="none" stroke="#f3f26a" stroke-width="1.700"/><ellipse cx="12.4" cy="-2" rx="5" ry="3.500" fill="#fff" opacity="0.160"/></g><circle class="lnt" cx="1459.9" cy="1745" r="14"/><circle class="lnt" cx="1459.9" cy="1745" r="11.800"/><path class="lnt" d="M1475.9 1744h5M1478.4 1741.5v5" stroke-width="1.100"/><g transform="translate(1460.6 1752.1) rotate(84.2)"><path d="M3.3 13.2A13.6 13.6 0 1 1 3.3 -13.2L15.1 -10.3A10.6 10.6 0 0 1 15.1 10.3Z" fill="url(#gLg)"/><ellipse cx="0.800" rx="14.900" ry="13.800" fill="none" stroke="#dcf03c" stroke-width="1.700"/><ellipse cx="13.5" cy="-2" rx="5" ry="3.500" fill="#fff" opacity="0.160"/></g><circle class="lnt" cx="1561.8" cy="1745" r="14"/><circle class="lnt" cx="1561.8" cy="1745" r="11.800"/><path class="lnt" d="M1577.8 1744h5M1580.3 1741.5v5" stroke-width="1.100"/><g transform="translate(1563.6 1752.1) rotate(75.8)"><path d="M3.2 13.2A13.6 13.6 0 1 1 3.2 -13.2L15.3 -10.3A10.6 10.6 0 0 1 15.3 10.3Z" fill="url(#gLg)"/><ellipse cx="0.800" rx="14.900" ry="13.800" fill="none" stroke="#dcf03c" stroke-width="1.700"/><ellipse cx="13.8" cy="-2" rx="5" ry="3.500" fill="#fff" opacity="0.160"/></g><circle class="lnt" cx="1663.7" cy="1745" r="14"/><circle class="lnt" cx="1663.7" cy="1745" r="11.800"/><path class="lnt" d="M1679.7 1744h5M1682.2 1741.5v5" stroke-width="1.100"/><g transform="translate(1666.6 1752.1) rotate(68)"><path d="M3 13.3A13.6 13.6 0 1 1 3 -13.3L15.8 -10.3A10.6 10.6 0 0 1 15.8 10.3Z" fill="url(#gLg)"/><ellipse cx="0.800" rx="14.900" ry="13.800" fill="none" stroke="#dcf03c" stroke-width="1.700"/><ellipse cx="14.4" cy="-2" rx="5" ry="3.500" fill="#fff" opacity="0.160"/></g><circle class="lnt" cx="1255.6" cy="1818.4" r="14"/><circle class="lnt" cx="1255.6" cy="1818.4" r="11.800"/><path class="lnt" d="M1271.6 1817.4h5M1274.1 1814.9v5" stroke-width="1.100"/><g transform="translate(1254.2 1826.2) rotate(100.3)"><path d="M2.9 13.3A13.6 13.6 0 1 1 2.9 -13.3L16.3 -10.4A10.6 10.6 0 0 1 16.3 10.4Z" fill="url(#gLR)"/><ellipse cx="0.800" rx="14.900" ry="13.800" fill="none" stroke="#f28c3c" stroke-width="1.700"/><ellipse cx="15" cy="-2" rx="5" ry="3.500" fill="#fff" opacity="0.160"/></g><circle class="lnt" cx="1357.5" cy="1818.4" r="14"/><circle class="lnt" cx="1357.5" cy="1818.4" r="11.800"/><path class="lnt" d="M1373.5 1817.4h5M1376 1814.9v5" stroke-width="1.100"/><g transform="translate(1357.1 1826.2) rotate(92.6)"><path d="M2.9 13.3A13.6 13.6 0 1 1 2.9 -13.3L16.1 -10.3A10.6 10.6 0 0 1 16.1 10.3Z" fill="url(#gLR)"/><ellipse cx="0.800" rx="14.900" ry="13.800" fill="none" stroke="#f28c3c" stroke-width="1.700"/><ellipse cx="14.8" cy="-2" rx="5" ry="3.500" fill="#fff" opacity="0.160"/></g>
<rect x="158.500" y="1809" width="23.100" height="36" fill="url(#gAg)"/><ellipse cx="170.300" cy="1811.600" rx="22.600" ry="4" fill="#0a9a0a"/><path d="M170.100 1767.600L147.800 1811.600A22.600 3 0 0 1 192.900 1811.600z" fill="url(#gAg2)"/><rect x="190" y="1856.100" width="36.500" height="21.500" fill="url(#gAr)"/><ellipse cx="226" cy="1866.900" rx="5" ry="22.600" fill="#b00808"/><path d="M269.600 1866.900L226 1844.300A3.500 22.600 0 0 1 226 1889.400z" fill="url(#gAr2)"/><path d="M169.800 1838.900L184 1842.600 194 1852.800 197.800 1866.900 194 1881 184 1891.200 169.800 1894.900 155.600 1891.200 145.600 1881 141.800 1866.900 145.600 1852.800 155.600 1842.600z" fill="url(#gAb)"/>
</svg></div>
<div id="side">
<div class="cap">Apariencia</div>
<div class="row" style="top:24.7px"><div class="sw" style="background:#3f3b2d"></div><svg class="eye" viewBox="0 0 18 17"><path d="M1 8.5C3.2 4.6 5.9 3 9 3s5.800 1.600 8 5.500C14.800 12.400 12.100 14 9 14S3.200 12.400 1 8.500z" fill="#d6d6d6"/><circle cx="9" cy="8.300" r="3.500" fill="#393939"/><circle cx="9" cy="8.300" r="2" fill="#d6d6d6"/><circle cx="9" cy="8.300" r="0.900" fill="#393939"/></svg><span class="lb" style="letter-spacing:-0.02px">Cuerpo de placa</span></div>
<div class="row" style="top:48.5px"><div class="sw" style="background:#c8a800"></div><svg class="eye" viewBox="0 0 18 17"><path d="M1 8.5C3.2 4.6 5.9 3 9 3s5.800 1.600 8 5.500C14.800 12.400 12.100 14 9 14S3.200 12.400 1 8.500z" fill="#d6d6d6"/><circle cx="9" cy="8.300" r="3.500" fill="#393939"/><circle cx="9" cy="8.300" r="2" fill="#d6d6d6"/><circle cx="9" cy="8.300" r="0.900" fill="#393939"/></svg><span class="lb" style="letter-spacing:-0.55px">F.Cu</span></div>
<div class="row" style="top:72.3px"><div class="sw" style="background:#c8a800"></div><svg class="eye" viewBox="0 0 18 17"><path d="M1 8.5C3.2 4.6 5.9 3 9 3s5.800 1.600 8 5.500C14.800 12.400 12.100 14 9 14S3.200 12.400 1 8.500z" fill="#d6d6d6"/><circle cx="9" cy="8.300" r="3.500" fill="#393939"/><circle cx="9" cy="8.300" r="2" fill="#d6d6d6"/><circle cx="9" cy="8.300" r="0.900" fill="#393939"/></svg><span class="lb" style="letter-spacing:-0.76px">B.Cu</span></div>
<div class="row" style="top:96.1px"><svg class="eye" viewBox="0 0 18 17"><path d="M1 8.5C3.2 4.6 5.9 3 9 3s5.800 1.600 8 5.500C14.800 12.400 12.100 14 9 14S3.200 12.400 1 8.500z" fill="#d6d6d6"/><circle cx="9" cy="8.300" r="3.500" fill="#393939"/><circle cx="9" cy="8.300" r="2" fill="#d6d6d6"/><circle cx="9" cy="8.300" r="0.900" fill="#393939"/></svg><span class="lb" style="letter-spacing:-0.09px">Adhesivo</span></div>
<div class="row" style="top:119.9px"><div class="sw" style="background:#808080"></div><svg class="eye" viewBox="0 0 18 17"><path d="M1 8.5C3.2 4.6 5.9 3 9 3s5.800 1.600 8 5.500C14.800 12.400 12.100 14 9 14S3.200 12.400 1 8.500z" fill="#d6d6d6"/><circle cx="9" cy="8.300" r="3.500" fill="#393939"/><circle cx="9" cy="8.300" r="2" fill="#d6d6d6"/><circle cx="9" cy="8.300" r="0.900" fill="#393939"/></svg><span class="lb" style="letter-spacing:0.05px">Pasta de soldadura</span></div>
<div class="row" style="top:143.7px"><div class="sw" style="background:#e8e8e8"></div><svg class="eye" viewBox="0 0 18 17"><path d="M1 8.5C3.2 4.6 5.9 3 9 3s5.800 1.600 8 5.500C14.800 12.400 12.100 14 9 14S3.200 12.400 1 8.500z" fill="#d6d6d6"/><circle cx="9" cy="8.300" r="3.500" fill="#393939"/><circle cx="9" cy="8.300" r="2" fill="#d6d6d6"/><circle cx="9" cy="8.300" r="0.900" fill="#393939"/></svg><span class="lb" style="letter-spacing:-0.20px">F.Silkscreen</span></div>
<div class="row" style="top:167.5px"><div class="sw" style="background:#e8e8e8"></div><svg class="eye" viewBox="0 0 18 17"><path d="M1 8.5C3.2 4.6 5.9 3 9 3s5.800 1.600 8 5.500C14.800 12.400 12.100 14 9 14S3.200 12.400 1 8.500z" fill="#d6d6d6"/><circle cx="9" cy="8.300" r="3.500" fill="#393939"/><circle cx="9" cy="8.300" r="2" fill="#d6d6d6"/><circle cx="9" cy="8.300" r="0.900" fill="#393939"/></svg><span class="lb" style="letter-spacing:-0.25px">B.Silkscreen</span></div>
<div class="row" style="top:191.3px"><div class="sw" style="background:#2f5a49"></div><svg class="eye" viewBox="0 0 18 17"><path d="M1 8.5C3.2 4.6 5.9 3 9 3s5.800 1.600 8 5.500C14.800 12.400 12.100 14 9 14S3.200 12.400 1 8.500z" fill="#d6d6d6"/><circle cx="9" cy="8.300" r="3.500" fill="#393939"/><circle cx="9" cy="8.300" r="2" fill="#d6d6d6"/><circle cx="9" cy="8.300" r="0.900" fill="#393939"/></svg><span class="lb" style="letter-spacing:-0.08px">F.Mask</span></div>
<div class="row" style="top:215.1px"><div class="sw" style="background:#2f5a49"></div><svg class="eye" viewBox="0 0 18 17"><path d="M1 8.5C3.2 4.6 5.9 3 9 3s5.800 1.600 8 5.500C14.800 12.400 12.100 14 9 14S3.200 12.400 1 8.500z" fill="#d6d6d6"/><circle cx="9" cy="8.300" r="3.500" fill="#393939"/><circle cx="9" cy="8.300" r="2" fill="#d6d6d6"/><circle cx="9" cy="8.300" r="0.900" fill="#393939"/></svg><span class="lb" style="letter-spacing:-0.22px">B.Mask</span></div>
<div class="row" style="top:238.9px"><svg class="sw" viewBox="0 0 20 17"><rect width="20" height="17" fill="#262626"/><rect x="7" y="0" width="6.500" height="5.500" fill="#000"/><rect x="0" y="6" width="6.500" height="5.500" fill="#000"/><rect x="14" y="6" width="6.500" height="5.500" fill="#000"/><rect x="7" y="12" width="6.500" height="5.500" fill="#000"/><rect x="0" y="12" width="6.500" height="5" fill="#050505"/><rect x="14" y="12" width="6.500" height="5" fill="#050505"/></svg><svg class="eye" viewBox="0 0 18 17"><path d="M1 8.5C3.2 4.6 5.9 3 9 3s5.800 1.600 8 5.500C14.800 12.400 12.100 14 9 14S3.200 12.400 1 8.500z" fill="#d6d6d6"/><circle cx="9" cy="8.300" r="3.500" fill="#393939"/><circle cx="9" cy="8.300" r="2" fill="#d6d6d6"/><circle cx="9" cy="8.300" r="0.900" fill="#393939"/></svg><span class="lb" style="letter-spacing:0.00px">User.Drawings</span></div>
<div class="row" style="top:262.7px"><svg class="sw" viewBox="0 0 20 17"><rect width="20" height="17" fill="#262626"/><rect x="7" y="0" width="6.500" height="5.500" fill="#000"/><rect x="0" y="6" width="6.500" height="5.500" fill="#000"/><rect x="14" y="6" width="6.500" height="5.500" fill="#000"/><rect x="7" y="12" width="6.500" height="5.500" fill="#000"/><rect x="0" y="12" width="6.500" height="5" fill="#050505"/><rect x="14" y="12" width="6.500" height="5" fill="#050505"/></svg><svg class="eye" viewBox="0 0 18 17"><path d="M1 8.5C3.2 4.6 5.9 3 9 3s5.800 1.600 8 5.500C14.800 12.400 12.100 14 9 14S3.200 12.400 1 8.500z" fill="#d6d6d6"/><circle cx="9" cy="8.300" r="3.500" fill="#393939"/><circle cx="9" cy="8.300" r="2" fill="#d6d6d6"/><circle cx="9" cy="8.300" r="0.900" fill="#393939"/></svg><span class="lb" style="letter-spacing:-0.03px">User.Comments</span></div>
<div class="row" style="top:286.5px"><svg class="sw" viewBox="0 0 20 17"><rect width="20" height="17" fill="#262626"/><rect x="7" y="0" width="6.500" height="5.500" fill="#000"/><rect x="0" y="6" width="6.500" height="5.500" fill="#000"/><rect x="14" y="6" width="6.500" height="5.500" fill="#000"/><rect x="7" y="12" width="6.500" height="5.500" fill="#000"/><rect x="0" y="12" width="6.500" height="5" fill="#050505"/><rect x="14" y="12" width="6.500" height="5" fill="#050505"/></svg><svg class="eye" viewBox="0 0 18 17"><path d="M1 8.5C3.2 4.6 5.9 3 9 3s5.800 1.600 8 5.500C14.800 12.400 12.100 14 9 14S3.200 12.400 1 8.500z" fill="#d6d6d6"/><circle cx="9" cy="8.300" r="3.500" fill="#393939"/><circle cx="9" cy="8.300" r="2" fill="#d6d6d6"/><circle cx="9" cy="8.300" r="0.900" fill="#393939"/></svg><span class="lb" style="letter-spacing:-0.65px">User.Eco1</span></div>
<div class="row" style="top:310.3px"><svg class="sw" viewBox="0 0 20 17"><rect width="20" height="17" fill="#262626"/><rect x="7" y="0" width="6.500" height="5.500" fill="#000"/><rect x="0" y="6" width="6.500" height="5.500" fill="#000"/><rect x="14" y="6" width="6.500" height="5.500" fill="#000"/><rect x="7" y="12" width="6.500" height="5.500" fill="#000"/><rect x="0" y="12" width="6.500" height="5" fill="#050505"/><rect x="14" y="12" width="6.500" height="5" fill="#050505"/></svg><svg class="eye" viewBox="0 0 18 17"><path d="M1 8.5C3.2 4.6 5.9 3 9 3s5.800 1.600 8 5.500C14.800 12.400 12.100 14 9 14S3.200 12.400 1 8.500z" fill="#d6d6d6"/><circle cx="9" cy="8.300" r="3.500" fill="#393939"/><circle cx="9" cy="8.300" r="2" fill="#d6d6d6"/><circle cx="9" cy="8.300" r="0.900" fill="#393939"/></svg><span class="lb" style="letter-spacing:-0.53px">User.Eco2</span></div>
<div class="row" style="top:346.0px"><svg class="eye" viewBox="0 0 18 17"><path d="M1 8.5C3.2 4.6 5.9 3 9 3s5.800 1.600 8 5.500C14.800 12.400 12.100 14 9 14S3.200 12.400 1 8.500z" fill="#d6d6d6"/><circle cx="9" cy="8.300" r="3.500" fill="#393939"/><circle cx="9" cy="8.300" r="2" fill="#d6d6d6"/><circle cx="9" cy="8.300" r="0.900" fill="#393939"/></svg><span class="lb" style="letter-spacing:-0.05px">Modelos de orificio</span></div>
<div class="row" style="top:369.8px"><svg class="eye" viewBox="0 0 18 17"><path d="M1 8.5C3.2 4.6 5.9 3 9 3s5.800 1.600 8 5.500C14.800 12.400 12.100 14 9 14S3.200 12.400 1 8.500z" fill="#d6d6d6"/><circle cx="9" cy="8.300" r="3.500" fill="#393939"/><circle cx="9" cy="8.300" r="2" fill="#d6d6d6"/><circle cx="9" cy="8.300" r="0.900" fill="#393939"/></svg><span class="lb" style="letter-spacing:-0.20px">Modelos SMD</span></div>
<div class="row" style="top:393.6px"><svg class="eye" viewBox="0 0 18 17"><path d="M1 8.5C3.2 4.6 5.9 3 9 3s5.800 1.600 8 5.500C14.800 12.400 12.100 14 9 14S3.200 12.400 1 8.500z" fill="#d6d6d6"/><circle cx="9" cy="8.300" r="3.500" fill="#393939"/><circle cx="9" cy="8.300" r="2" fill="#d6d6d6"/><circle cx="9" cy="8.300" r="0.900" fill="#393939"/></svg><span class="lb" style="letter-spacing:0.08px">Modelos virtuales</span></div>
<div class="row" style="top:417.4px"><svg class="eye" viewBox="0 0 18 17"><path d="M1 8.5C3.2 4.6 5.9 3 9 3s5.800 1.600 8 5.500C14.800 12.400 12.100 14 9 14S3.200 12.400 1 8.500z" fill="#d6d6d6"/><circle cx="9" cy="8.300" r="3.500" fill="#393939"/><circle cx="9" cy="8.300" r="2" fill="#d6d6d6"/><circle cx="9" cy="8.300" r="0.900" fill="#393939"/></svg><span class="lb" style="letter-spacing:-0.07px">Modelos no en archivo</span></div>
<div class="row" style="top:441.2px"><svg class="eye" viewBox="0 0 18 17"><path d="M1 8.5C3.2 4.6 5.9 3 9 3s5.800 1.600 8 5.500C14.800 12.400 12.100 14 9 14S3.200 12.400 1 8.500z" fill="#d6d6d6"/><circle cx="9" cy="8.300" r="3.500" fill="#393939"/><circle cx="9" cy="8.300" r="2" fill="#d6d6d6"/><circle cx="9" cy="8.300" r="0.900" fill="#393939"/></svg><span class="lb" style="letter-spacing:-0.11px">Modelos marcados</span></div>
<div class="row" style="top:465.0px"><svg class="eye" viewBox="0 0 18 17"><path d="M1 8.5C3.2 4.6 5.9 3 9 3s5.800 1.600 8 5.500C14.800 12.400 12.100 14 9 14S3.200 12.400 1 8.500z" fill="#6e6e6e"/><path d="M2.500 13.500L15.500 3.500" stroke="#393939" stroke-width="3"/><path d="M2.500 13.500L15.500 3.500" stroke="#7a7a7a" stroke-width="1.300"/></svg><span class="lb" style="letter-spacing:0.13px">Cajas de delimitación</span></div>
<div class="row" style="top:501.2px"><svg class="eye" viewBox="0 0 18 17"><path d="M1 8.5C3.2 4.6 5.9 3 9 3s5.800 1.600 8 5.500C14.800 12.400 12.100 14 9 14S3.200 12.400 1 8.500z" fill="#d6d6d6"/><circle cx="9" cy="8.300" r="3.500" fill="#393939"/><circle cx="9" cy="8.300" r="2" fill="#d6d6d6"/><circle cx="9" cy="8.300" r="0.900" fill="#393939"/></svg><span class="lb" style="letter-spacing:-0.16px">Valores</span></div>
<div class="row" style="top:525.0px"><svg class="eye" viewBox="0 0 18 17"><path d="M1 8.5C3.2 4.6 5.9 3 9 3s5.800 1.600 8 5.500C14.800 12.400 12.100 14 9 14S3.200 12.400 1 8.500z" fill="#d6d6d6"/><circle cx="9" cy="8.300" r="3.500" fill="#393939"/><circle cx="9" cy="8.300" r="2" fill="#d6d6d6"/><circle cx="9" cy="8.300" r="0.900" fill="#393939"/></svg><span class="lb" style="letter-spacing:-0.08px">Referencias</span></div>
<div class="row" style="top:548.8px"><svg class="eye" viewBox="0 0 18 17"><path d="M1 8.5C3.2 4.6 5.9 3 9 3s5.800 1.600 8 5.500C14.800 12.400 12.100 14 9 14S3.200 12.400 1 8.500z" fill="#d6d6d6"/><circle cx="9" cy="8.300" r="3.500" fill="#393939"/><circle cx="9" cy="8.300" r="2" fill="#d6d6d6"/><circle cx="9" cy="8.300" r="0.900" fill="#393939"/></svg><span class="lb" style="letter-spacing:0.13px">Texto de la huella</span></div>
<div class="row" style="top:572.6px"><svg class="eye" viewBox="0 0 18 17"><path d="M1 8.5C3.2 4.6 5.9 3 9 3s5.800 1.600 8 5.500C14.800 12.400 12.100 14 9 14S3.200 12.400 1 8.500z" fill="#6e6e6e"/><path d="M2.500 13.500L15.500 3.500" stroke="#393939" stroke-width="3"/><path d="M2.500 13.500L15.500 3.500" stroke="#7a7a7a" stroke-width="1.300"/></svg><span class="lb" style="letter-spacing:0.20px">Serigrafía fuera de</span></div>
<div class="row" style="top:608.3px"><svg class="eye" viewBox="0 0 18 17"><path d="M1 8.5C3.2 4.6 5.9 3 9 3s5.800 1.600 8 5.500C14.800 12.400 12.100 14 9 14S3.200 12.400 1 8.500z" fill="#d6d6d6"/><circle cx="9" cy="8.300" r="3.500" fill="#393939"/><circle cx="9" cy="8.300" r="2" fill="#d6d6d6"/><circle cx="9" cy="8.300" r="0.900" fill="#393939"/></svg><span class="lb" style="letter-spacing:-0.40px">Eje 3D</span></div>
<div class="row" style="top:632.1px"><div class="sw" style="background:#cdc9e6"></div><span class="lb" style="letter-spacing:0.20px">Inicio del fondo</span></div>
<div class="row" style="top:655.9px"><div class="sw" style="background:#696789"></div><span class="lb" style="letter-spacing:0.11px">Fin del fondo</span></div>
<div class="abs" style="left:22px;top:1635px;width:24px;height:24px;border:2px solid #585858;border-radius:5px;background:#3b3b3b"></div><div class="abs" style="left:52px;top:1635px;width:186px;height:24px;overflow:hidden;font-weight:bold;font-size:15.4px;line-height:24px;white-space:nowrap;color:#f4f4f4">Usar colores del apilado de placa</div><div class="abs" style="left:10px;top:1666px;width:236px;height:1px;background:#464646"></div><div class="abs" style="left:16.500px;top:1676px;font-weight:bold;font-size:15.4px;line-height:24px;white-space:nowrap;color:#f4f4f4">Ajustes por defecto</div><div class="abs" style="left:33px;top:1711px;font-weight:bold;font-size:15.4px;line-height:24px;white-space:nowrap;color:#f4f4f4">---</div><svg class="abs" style="left:206px;top:1718px" width="14" height="9" viewBox="0 0 14 9"><path d="M0.500 0.500h13L7 8.500z" fill="#f4f4f4"/></svg><div class="abs" style="left:16.500px;top:1747px;font-weight:bold;font-size:15.4px;line-height:24px;white-space:nowrap;color:#f4f4f4">Vistas (Shift+Tab):</div><div class="abs" style="left:33px;top:1782.500px;font-weight:bold;font-size:15.4px;line-height:24px;white-space:nowrap;color:#f4f4f4">---</div><svg class="abs" style="left:206px;top:1790px" width="14" height="9" viewBox="0 0 14 9"><path d="M0.500 0.500h13L7 8.500z" fill="#f4f4f4"/></svg></div>
<div id="status"><span style="left:7px">Último tiempo de renderizado 5 ms</span><span style="left:2415.6px;letter-spacing:-0.5px">dx 0,00</span><span style="left:2577.7px;letter-spacing:-0.5px">dy 0,00</span><span style="left:2740.4px;letter-spacing:-0.35px">zoom 1,00</span><svg class="abs" style="left:2888px;top:5px" width="30" height="28" viewBox="0 0 30 28"><path d="M3 25L26 3M10 25L27 9M17 25L27 15" stroke="#1a1a1a" stroke-width="2.500" stroke-dasharray="2.500 1.500"/></svg></div>
</div>
</body></html>
